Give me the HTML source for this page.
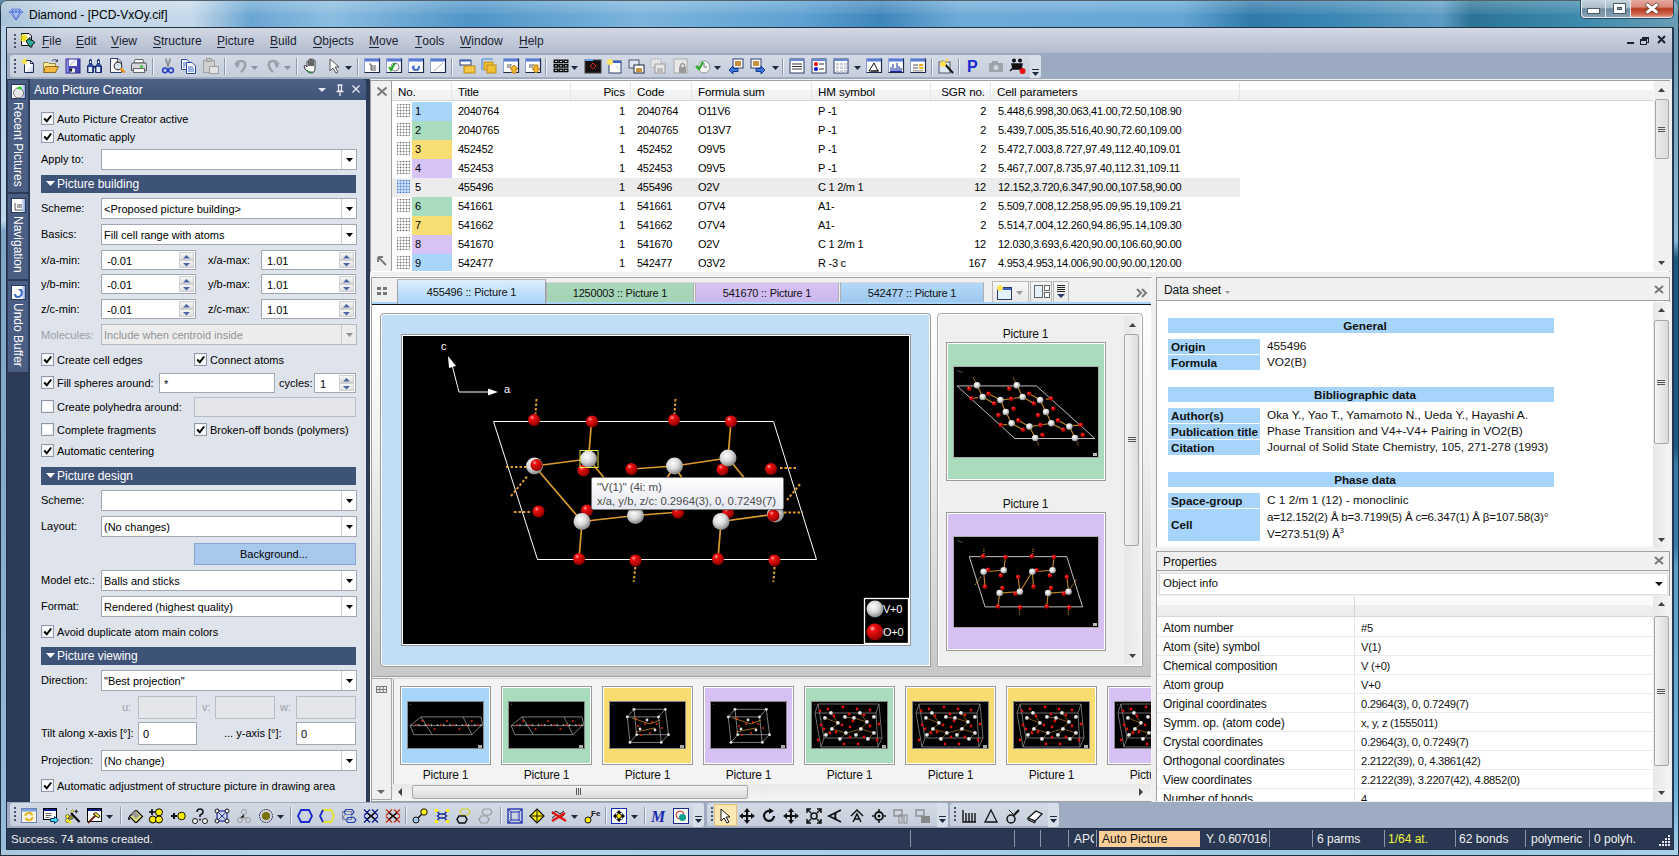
<!DOCTYPE html>
<html><head><meta charset="utf-8">
<style>
*{box-sizing:border-box}
body{margin:0;width:1679px;height:856px;overflow:hidden;position:relative;font-family:"Liberation Sans",sans-serif;font-size:12px;color:#000;background:#2a6a8e}
.a{position:absolute}
.t{position:absolute;white-space:nowrap;line-height:14px}
svg{position:absolute;overflow:visible}
u{text-decoration:none;border-bottom:1px solid #000;line-height:11px;display:inline-block}
</style></head><body>


<div class="a" style="left:0;top:0;width:1679px;height:856px;background:linear-gradient(90deg,#a9c3d9 0px,#c2d6e8 60px,#c6d9ea 190px,#6aa6d2 250px,#8bbde0 330px,#4f95c8 470px,#7cb5dc 640px,#5ea1d2 800px,#3f86bb 880px,#6eabd8 960px,#64a6d6 1180px,#2f7aa9 1250px,#3a86b4 1330px,#5d9cc4 1440px,#2c7496 1470px,#3c8aad 1580px,#6b9db6 1679px);border:1px solid #1d2e3c;border-radius:7px 7px 0 0"></div>
<div class="a" style="left:0;top:0;width:1679px;height:14px;background:linear-gradient(rgba(255,255,255,0.25),rgba(255,255,255,0.05))"></div>
<div class="t" style="left:29px;top:8px;font-size:12px;color:#000">Diamond - [PCD-VxOy.cif]</div>
<svg style="left:8px;top:8px" width="16" height="13" viewBox="0 0 16 13"><path d="M1 4 L4 1 L12 1 L15 4 L8 12 Z" fill="#a8c0ee" stroke="#7c98d8" stroke-width="1"/><path d="M1 4 H15 M5 1 L4 4 L8 12 M11 1 L12 4 L8 12 M8 1 L8 4" stroke="#3d5fd0" fill="none" stroke-width="0.9"/></svg>
<div class="a" style="left:1580px;top:0px;width:94px;height:19px;border:1px solid #2e4a5e;border-top:none;border-radius:0 0 5px 5px;overflow:hidden;background:#dfe8ee">
 <div class="a" style="left:1px;top:0;width:23px;height:17px;background:linear-gradient(#c7d6df,#a9bcc8 45%,#6e8aa0 52%,#8aa1b4);border-radius:0 0 0 4px"></div>
 <div class="a" style="left:25px;top:0;width:24px;height:17px;background:linear-gradient(#c7d6df,#a9bcc8 45%,#6e8aa0 52%,#8aa1b4)"></div>
 <div class="a" style="left:50px;top:0;width:42px;height:17px;background:linear-gradient(#e6aaa0,#d88a78 40%,#b63a1e 52%,#d06850 85%,#e4a090);border-radius:0 0 4px 0"></div>
 <div class="a" style="left:7px;top:9px;width:11px;height:4px;background:#fff;box-shadow:0 0 0 1px #4a5c6c"></div>
 <div class="a" style="left:33px;top:4px;width:11px;height:9px;border:3px solid #fff;box-shadow:0 0 0 1px #4a5c6c,inset 0 0 0 1px #4a5c6c"></div>
 <svg style="left:63px;top:3px" width="16" height="11" viewBox="0 0 16 11"><path d="M2 1 L14 10 M14 1 L2 10" stroke="#5a2a20" stroke-width="4.5"/><path d="M2.5 1.2 L13.5 9.8 M13.5 1.2 L2.5 9.8" stroke="#fff" stroke-width="3"/></svg>
</div>
<div class="a" style="left:1673px;top:26px;width:6px;height:830px;background:linear-gradient(#6a98b4 0,#7aaac6 120px,#8ab8d8 215px,#1f5a80 232px,#1f5a80 420px,#3a7aa8 440px,#3a7aa8 520px,#5aa0c8 540px,#6ab0d8 760px,#a8d0e8 830px);border-right:1px solid #1d2e3c"></div>
<div class="a" style="left:0;top:849px;width:1679px;height:7px;background:linear-gradient(90deg,#a9c8e0,#b8d8ec 300px,#a8d0e8 900px,#9ac8e2 1400px,#a8d0e8);border-bottom:1px solid #1d2e3c;border-left:1px solid #1d2e3c;border-right:1px solid #1d2e3c"></div>
<div class="a" style="left:0;top:26px;width:7px;height:824px;background:linear-gradient(90deg,#1d2e3c 0,#1d2e3c 1px,transparent 1px,transparent 6px,#d8e8f4 6px),linear-gradient(#b4cfe6 0,#bcd6ea 195px,#7ea4c8 205px,#86acd0 500px,#98bcdc 824px)"></div>
<div class="a" style="left:6px;top:27px;width:1668px;height:823px;border:1px solid #1f3344;background:#2b3a56"></div>

<div class="a" style="left:7px;top:28px;width:1665px;height:25px;background:linear-gradient(#d2d8e3,#c3cad9 50%,#b2bccf)"></div><div class="a" style="left:7px;top:53px;width:1665px;height:26px;background:#9ba9c1"></div><div class="a" style="left:14px;top:34px;width:2px;height:2px;background:#46536a"></div><div class="a" style="left:14px;top:38px;width:2px;height:2px;background:#46536a"></div><div class="a" style="left:14px;top:42px;width:2px;height:2px;background:#46536a"></div><div class="a" style="left:14px;top:46px;width:2px;height:2px;background:#46536a"></div><svg style="left:19px;top:32px" width="17" height="16" viewBox="0 0 17 16"><path d="M2.5 1.5 H10 L12.5 4 V13.5 H2.5 Z" fill="#f8f8f8" stroke="#111"/><path d="M5 2 V10 M1 6 H9 M2.2 3.2 L7.8 8.8 M7.8 3.2 L2.2 8.8" stroke="#f0e020" stroke-width="1.6"/><path d="M7 9 L11 5.5 V8 H13 L16 10.5 L13 13 V15 L11 15 Z" fill="#2aa890" stroke="#111"/></svg><div class="t" style="left:42px;top:34px;font-size:12px;color:#1b2333"><u style="border-color:#1b2333">F</u>ile</div><div class="t" style="left:76px;top:34px;font-size:12px;color:#1b2333"><u style="border-color:#1b2333">E</u>dit</div><div class="t" style="left:111px;top:34px;font-size:12px;color:#1b2333"><u style="border-color:#1b2333">V</u>iew</div><div class="t" style="left:153px;top:34px;font-size:12px;color:#1b2333"><u style="border-color:#1b2333">S</u>tructure</div><div class="t" style="left:217px;top:34px;font-size:12px;color:#1b2333"><u style="border-color:#1b2333">P</u>icture</div><div class="t" style="left:270px;top:34px;font-size:12px;color:#1b2333"><u style="border-color:#1b2333">B</u>uild</div><div class="t" style="left:313px;top:34px;font-size:12px;color:#1b2333"><u style="border-color:#1b2333">O</u>bjects</div><div class="t" style="left:369px;top:34px;font-size:12px;color:#1b2333"><u style="border-color:#1b2333">M</u>ove</div><div class="t" style="left:415px;top:34px;font-size:12px;color:#1b2333"><u style="border-color:#1b2333">T</u>ools</div><div class="t" style="left:460px;top:34px;font-size:12px;color:#1b2333"><u style="border-color:#1b2333">W</u>indow</div><div class="t" style="left:519px;top:34px;font-size:12px;color:#1b2333"><u style="border-color:#1b2333">H</u>elp</div><div class="a" style="left:1627px;top:42px;width:7px;height:2px;background:#1a2230"></div><div class="a" style="left:1642px;top:37px;width:7px;height:6px;border:1px solid #1a2230;border-top-width:2px"></div><div class="a" style="left:1640px;top:39px;width:7px;height:6px;border:1px solid #1a2230;border-top-width:2px;background:#c5cdda"></div><svg style="left:1657px;top:35px" width="9" height="9" viewBox="0 0 9 9"><path d="M1 1 L8 8 M8 1 L1 8" stroke="#1a2230" stroke-width="2"/></svg>
<div class="a" style="left:10px;top:55px;width:1031px;height:23px;background:linear-gradient(#d3dae5,#c6cedc);border-radius:3px;border-bottom:1px solid #a4afc2"></div><div class="a" style="left:1030px;top:55px;width:11px;height:23px;background:#d9dfe8;border-radius:0 3px 3px 0"></div><svg style="left:1032px;top:72px" width="7" height="4" viewBox="0 0 7 4"><path d="M0 0 H7 L3.5 4 Z" fill="#1c2a40"/></svg><div class="a" style="left:1032px;top:69px;width:7px;height:1px;background:#1c2a40"></div><div class="a" style="left:14px;top:59px;width:2px;height:2px;background:#46536a"></div><div class="a" style="left:14px;top:63px;width:2px;height:2px;background:#46536a"></div><div class="a" style="left:14px;top:67px;width:2px;height:2px;background:#46536a"></div><div class="a" style="left:14px;top:71px;width:2px;height:2px;background:#46536a"></div><svg style="left:21px;top:58px" width="16" height="16" viewBox="0 0 16 16"><defs><linearGradient id="gdoc" x1="0" y1="0" x2="1" y2="1"><stop offset="0.5" stop-color="#fff"/><stop offset="1" stop-color="#b8b8e0"/></linearGradient></defs><path d="M3.5 2.5 H9.5 L12.5 5.5 V14.5 H3.5 Z" fill="url(#gdoc)" stroke="#1c2a5a"/><path d="M9.5 2.5 V5.5 H12.5" fill="none" stroke="#1c2a5a"/><path d="M3.5 0.5 V6.5 M0.5 3.5 H6.5 M1.3 1.3 L5.7 5.7 M5.7 1.3 L1.3 5.7" stroke="#f4e040" stroke-width="1.2"/></svg><svg style="left:43px;top:58px" width="16" height="16" viewBox="0 0 16 16"><path d="M0.5 4.5 H5 L6 5.5 H12.5 V14.5 H0.5 Z" fill="#f8ea90" stroke="#9a8a50"/><path d="M2.5 8.5 H15.5 L12.5 14.5 H0.5 Z" fill="#f4b840" stroke="#8a6a20"/><path d="M9 2.5 Q11.5 0.5 14.5 2.5" stroke="#3a4a6a" fill="none"/><path d="M15 1 V4 H12 Z" fill="#3a4a6a"/></svg><svg style="left:65px;top:58px" width="16" height="16" viewBox="0 0 16 16"><rect x="1" y="1" width="14" height="14" fill="#4646b4" stroke="#2a2a90"/><rect x="1.5" y="1.5" width="2" height="13" fill="#8a8ae0"/><rect x="4" y="1.5" width="8" height="6.5" fill="#f4f4ff"/><path d="M5 7 L11 2" stroke="#b8b8d8"/><rect x="5" y="10.5" width="5" height="4" fill="#eee"/><rect x="5" y="10.5" width="2" height="3" fill="#111"/></svg><svg style="left:87px;top:58px" width="16" height="16" viewBox="0 0 16 16"><path d="M0.5 14.5 V8 L2.5 6 V2 Q3.5 0.5 4.5 2 V6 L6.5 8 V14.5 Z M8.5 14.5 V8 L10.5 6 V2 Q11.5 0.5 12.5 2 V6 L14.5 8 V14.5 Z" fill="#2a4aa8" stroke="#1c2a6a"/><rect x="1.5" y="9" width="3.5" height="5" fill="#e8ecf8"/><rect x="9.5" y="9" width="3.5" height="5" fill="#e8ecf8"/><path d="M6.5 9 H8.5" stroke="#1c2a6a" stroke-width="2"/><rect x="3" y="3" width="1.2" height="2" fill="#fff"/><rect x="11" y="3" width="1.2" height="2" fill="#fff"/></svg><svg style="left:110px;top:58px" width="16" height="16" viewBox="0 0 16 16"><path d="M0.5 0.5 H8 L11.5 4 V14.5 H0.5 Z" fill="#fff" stroke="#2a3a6a"/><circle cx="8" cy="8" r="3.8" fill="#e4ecf4" stroke="#3a3a3a" stroke-width="1.2"/><path d="M7 6 L9 8" stroke="#8aa"/><path d="M10.5 10.5 L14.5 14.5" stroke="#e89020" stroke-width="2.5"/><path d="M8 4 L7 1" stroke="#333"/></svg><svg style="left:131px;top:58px" width="16" height="16" viewBox="0 0 16 16"><path d="M4 1.5 H12 L13 5 H3 Z" fill="#fff" stroke="#666"/><path d="M0.5 6.5 Q0.5 5 2 5 H14 Q15.5 5 15.5 6.5 V12.5 H0.5 Z" fill="#d4d8de" stroke="#555"/><rect x="2.5" y="10.5" width="11" height="4" fill="#f4f4f4" stroke="#666"/><rect x="9" y="7.5" width="3" height="2" fill="#20c020"/></svg><div class="a" style="left:152px;top:58px;width:1px;height:17px;background:#8d99ad;box-shadow:1px 0 0 #eef1f6"></div><svg style="left:160px;top:58px" width="16" height="16" viewBox="0 0 16 16"><path d="M5.5 0.5 L8.5 9 M10.5 0.5 L7.5 9" stroke="#8a8a8a" stroke-width="1.6"/><circle cx="5" cy="12.3" r="2.4" fill="none" stroke="#2040c0" stroke-width="1.5"/><circle cx="11" cy="12.3" r="2.4" fill="none" stroke="#2040c0" stroke-width="1.5"/></svg><svg style="left:181px;top:58px" width="16" height="16" viewBox="0 0 16 16"><path d="M0.5 1.5 H6 L8.5 4 V11.5 H0.5 Z" fill="#fff" stroke="#2a4aa0"/><path d="M5.5 4.5 H11 L14.5 8 V15.5 H5.5 Z" fill="#fff" stroke="#2a4aa0"/><path d="M2 5 H6 M2 7 H6 M2 9 H4 M7 9 H12 M7 11 H13 M7 13 H13" stroke="#3a6ad0"/></svg><svg style="left:203px;top:58px" width="16" height="16" viewBox="0 0 16 16"><rect x="0.5" y="2.5" width="11" height="12" fill="#d0d0d0" stroke="#a0a0a0"/><rect x="3.5" y="0.5" width="5" height="3" fill="#c0c0c0" stroke="#a0a0a0"/><rect x="6.5" y="8.5" width="9" height="7" fill="#e4e4e4" stroke="#a0a0a0"/></svg><div class="a" style="left:224px;top:58px;width:1px;height:17px;background:#8d99ad;box-shadow:1px 0 0 #eef1f6"></div><svg style="left:233px;top:58px" width="16" height="16" viewBox="0 0 16 16"><path d="M4 9 Q2 3 8 3 Q13 3 12 8 Q11 12 8 14" stroke="#9aa0aa" stroke-width="2.5" fill="none"/><path d="M1 5 L5 10 L7 5 Z" fill="#9aa0aa"/></svg><svg style="left:251px;top:66px" width="7" height="4" viewBox="0 0 7 4"><path d="M0 0 H7 L3.5 4 Z" fill="#8a93a3"/></svg><svg style="left:265px;top:58px" width="16" height="16" viewBox="0 0 16 16"><path d="M12 9 Q14 3 8 3 Q3 3 4 8 Q5 12 8 14" stroke="#9aa0aa" stroke-width="2.5" fill="none"/><path d="M15 5 L11 10 L9 5 Z" fill="#9aa0aa"/></svg><svg style="left:284px;top:66px" width="7" height="4" viewBox="0 0 7 4"><path d="M0 0 H7 L3.5 4 Z" fill="#8a93a3"/></svg><div class="a" style="left:296px;top:58px;width:1px;height:17px;background:#8d99ad;box-shadow:1px 0 0 #eef1f6"></div><svg style="left:303px;top:58px" width="16" height="16" viewBox="0 0 16 16"><path d="M4 9 V4 Q4 3 5 3 Q6 3 6 4 V8 V2 Q6 1 7 1 Q8 1 8 2 V8 V2 Q8 1 9 1 Q10 1 10 2 V8 V3 Q10 2 11 2 Q12 2 12 3 V10 Q12 15 8 15 Q5 15 2 11 L1 8 Q2 7 3 8 Z" fill="#fff" stroke="#222" stroke-width=".9"/><path d="M3 12 Q6 15 10 14" stroke="#3a8a4a" stroke-width="1.5" fill="none"/></svg><svg style="left:328px;top:58px" width="16" height="16" viewBox="0 0 16 16"><path d="M2 1 L2 13 L5 10 L8 15 L10 14 L7 9 L11 9 Z" fill="#fff" stroke="#555"/></svg><svg style="left:345px;top:66px" width="7" height="4" viewBox="0 0 7 4"><path d="M0 0 H7 L3.5 4 Z" fill="#1c2a40"/></svg><div class="a" style="left:357px;top:58px;width:1px;height:17px;background:#8d99ad;box-shadow:1px 0 0 #eef1f6"></div><svg style="left:364px;top:58px" width="16" height="16" viewBox="0 0 16 16"><rect x="0.5" y="0.5" width="15" height="14" fill="#fff" stroke="#8aa0d8"/><path d="M15.5 0.5 V14.5 H0.5" stroke="#1c2a4a" fill="none" stroke-width="1.2"/><rect x="1" y="1" width="14" height="2.5" fill="#5a7ad8"/><path d="M10 13.5 L14.5 9" stroke="#c8d4ec"/><path d="M5 6 H7 V12 H12 M7 8 H12 M7 10 H12" stroke="#555" fill="none"/></svg><svg style="left:386px;top:58px" width="16" height="16" viewBox="0 0 16 16"><rect x="0.5" y="0.5" width="15" height="14" fill="#fff" stroke="#8aa0d8"/><path d="M15.5 0.5 V14.5 H0.5" stroke="#1c2a4a" fill="none" stroke-width="1.2"/><rect x="1" y="1" width="14" height="2.5" fill="#5a7ad8"/><path d="M10 13.5 L14.5 9" stroke="#c8d4ec"/><circle cx="9" cy="9" r="4" fill="#fff" stroke="#888"/><path d="M3 9 L5 12 L9 5" stroke="#2a2" stroke-width="2" fill="none"/></svg><svg style="left:408px;top:58px" width="16" height="16" viewBox="0 0 16 16"><rect x="0.5" y="0.5" width="15" height="14" fill="#fff" stroke="#8aa0d8"/><path d="M15.5 0.5 V14.5 H0.5" stroke="#1c2a4a" fill="none" stroke-width="1.2"/><rect x="1" y="1" width="14" height="2.5" fill="#5a7ad8"/><path d="M10 13.5 L14.5 9" stroke="#c8d4ec"/><path d="M11 8 Q11 12 8 12 Q5 12 5 9" stroke="#3a6ad0" stroke-width="2" fill="none"/><path d="M3 9 L7 7 L6 11 Z" fill="#3a6ad0"/></svg><svg style="left:430px;top:58px" width="16" height="16" viewBox="0 0 16 16"><rect x="0.5" y="0.5" width="15" height="14" fill="#fff" stroke="#8aa0d8"/><path d="M15.5 0.5 V14.5 H0.5" stroke="#1c2a4a" fill="none" stroke-width="1.2"/><rect x="1" y="1" width="14" height="2.5" fill="#5a7ad8"/><path d="M10 13.5 L14.5 9" stroke="#c8d4ec"/><path d="M4 13 L13 5" stroke="#aab" /></svg><div class="a" style="left:451px;top:58px;width:1px;height:17px;background:#8d99ad;box-shadow:1px 0 0 #eef1f6"></div><svg style="left:459px;top:58px" width="16" height="16" viewBox="0 0 16 16"><rect x="1" y="2" width="11" height="5" fill="#fff" stroke="#2a3c6a"/><rect x="1" y="2" width="11" height="1.5" fill="#3a64c8"/><rect x="5" y="8" width="11" height="7" fill="#f0c030" stroke="#c09020"/><path d="M7 10 H15 M7 12.5 H15" stroke="#fff3a0" stroke-dasharray="1 1"/></svg><svg style="left:481px;top:58px" width="16" height="16" viewBox="0 0 16 16"><path d="M1 1 H12 M1 1 V12" stroke="#6aa0e0" stroke-width="1.5"/><rect x="3" y="4" width="9" height="8" fill="#f0c030" stroke="#c09020"/><rect x="6" y="7" width="9" height="8" fill="#f0c030" stroke="#c09020"/></svg><svg style="left:503px;top:58px" width="16" height="16" viewBox="0 0 16 16"><rect x="0.5" y="0.5" width="15" height="14" fill="#fff" stroke="#8aa0d8"/><path d="M15.5 0.5 V14.5 H0.5" stroke="#1c2a4a" fill="none" stroke-width="1.2"/><rect x="1" y="1" width="14" height="2.5" fill="#5a7ad8"/><path d="M10 13.5 L14.5 9" stroke="#c8d4ec"/><path d="M4 7 H9 M4 9 H8" stroke="#555"/><path d="M9 15 V11 H7 L11 7 L15 11 H13 V15 Z" fill="#f4b830" stroke="#c08010"/></svg><svg style="left:525px;top:58px" width="16" height="16" viewBox="0 0 16 16"><rect x="0.5" y="0.5" width="15" height="14" fill="#fff" stroke="#8aa0d8"/><path d="M15.5 0.5 V14.5 H0.5" stroke="#1c2a4a" fill="none" stroke-width="1.2"/><rect x="1" y="1" width="14" height="2.5" fill="#5a7ad8"/><path d="M10 13.5 L14.5 9" stroke="#c8d4ec"/><path d="M4 7 H9 M4 9 H8" stroke="#555"/><path d="M9 7 V11 H7 L11 15 L15 11 H13 V7 Z" fill="#f4b830" stroke="#c08010"/></svg><div class="a" style="left:545px;top:58px;width:1px;height:17px;background:#8d99ad;box-shadow:1px 0 0 #eef1f6"></div><svg style="left:553px;top:58px" width="16" height="16" viewBox="0 0 16 16"><rect x="1.2" y="2.2" width="3.6" height="2.4" fill="none" stroke="#000" stroke-width="1.3"/><rect x="1.2" y="6.7" width="3.6" height="2.4" fill="none" stroke="#000" stroke-width="1.3"/><rect x="1.2" y="11.2" width="3.6" height="2.4" fill="none" stroke="#000" stroke-width="1.3"/><rect x="6.2" y="2.2" width="3.6" height="2.4" fill="none" stroke="#000" stroke-width="1.3"/><rect x="6.2" y="6.7" width="3.6" height="2.4" fill="none" stroke="#000" stroke-width="1.3"/><rect x="6.2" y="11.2" width="3.6" height="2.4" fill="none" stroke="#000" stroke-width="1.3"/><rect x="11.2" y="2.2" width="3.6" height="2.4" fill="none" stroke="#000" stroke-width="1.3"/><rect x="11.2" y="6.7" width="3.6" height="2.4" fill="none" stroke="#000" stroke-width="1.3"/><rect x="11.2" y="11.2" width="3.6" height="2.4" fill="none" stroke="#000" stroke-width="1.3"/></svg><svg style="left:571px;top:66px" width="7" height="4" viewBox="0 0 7 4"><path d="M0 0 H7 L3.5 4 Z" fill="#1c2a40"/></svg><svg style="left:585px;top:58px" width="16" height="16" viewBox="0 0 16 16"><rect x="0" y="2" width="16" height="13" fill="#111" stroke="#444"/><rect x="0" y="1" width="8" height="2" fill="#6aa0e0"/><path d="M8 5 L11 8 L8 11 L5 8 Z" fill="none" stroke="#d22"/></svg><svg style="left:606px;top:58px" width="16" height="16" viewBox="0 0 16 16"><rect x="3" y="3" width="12" height="12" fill="#fff" stroke="#2a3c6a"/><rect x="3" y="3" width="12" height="2" fill="#3a64c8"/><path d="M10 8 L15 13" stroke="#bcd" /><circle cx="4" cy="4" r="3" fill="#ffe860"/></svg><svg style="left:628px;top:58px" width="16" height="16" viewBox="0 0 16 16"><rect x="1" y="2" width="10" height="8" fill="#dde6f4" stroke="#556"/><rect x="6" y="7" width="10" height="8" fill="#fff" stroke="#223"/><rect x="8" y="10" width="6" height="4" fill="#c89040"/></svg><svg style="left:650px;top:58px" width="16" height="16" viewBox="0 0 16 16"><rect x="1" y="1" width="10" height="8" fill="#e6e6e6" stroke="#aaa" stroke-dasharray="2 1"/><rect x="5" y="6" width="10" height="9" fill="#e6e6e6" stroke="#999"/><rect x="7" y="10" width="6" height="4" fill="#bbb"/></svg><svg style="left:673px;top:58px" width="16" height="16" viewBox="0 0 16 16"><rect x="1" y="1" width="13" height="14" fill="#e8e8e8" stroke="#aaa"/><rect x="6" y="9" width="7" height="6" fill="#999"/><path d="M7.5 9 V7 Q9.5 4 11.5 7 V9" stroke="#999" fill="none" stroke-width="1.5"/></svg><svg style="left:695px;top:58px" width="16" height="16" viewBox="0 0 16 16"><circle cx="9" cy="9" r="6" fill="#f4f4f4" stroke="#999"/><path d="M9 5 V9 H12" stroke="#777" fill="none"/><path d="M1 8 L4 11 L8 4" stroke="#2a2" stroke-width="2.2" fill="none"/></svg><svg style="left:714px;top:66px" width="7" height="4" viewBox="0 0 7 4"><path d="M0 0 H7 L3.5 4 Z" fill="#1c2a40"/></svg><svg style="left:728px;top:58px" width="16" height="16" viewBox="0 0 16 16"><rect x="5" y="1" width="10" height="9" fill="#fff" stroke="#2a3c6a"/><rect x="7" y="3" width="6" height="5" fill="#c89040"/><path d="M1 12 L5 8 V10.5 H10 V13.5 H5 V16 Z" fill="#3a7ae0" stroke="#1a3a90"/></svg><svg style="left:750px;top:58px" width="16" height="16" viewBox="0 0 16 16"><rect x="1" y="1" width="10" height="9" fill="#fff" stroke="#2a3c6a"/><rect x="3" y="3" width="6" height="5" fill="#c89040"/><path d="M15 12 L11 8 V10.5 H6 V13.5 H11 V16 Z" fill="#3a7ae0" stroke="#1a3a90"/></svg><svg style="left:772px;top:66px" width="7" height="4" viewBox="0 0 7 4"><path d="M0 0 H7 L3.5 4 Z" fill="#1c2a40"/></svg><div class="a" style="left:782px;top:58px;width:1px;height:17px;background:#8d99ad;box-shadow:1px 0 0 #eef1f6"></div><svg style="left:789px;top:58px" width="16" height="16" viewBox="0 0 16 16"><rect x="1" y="1" width="14" height="14" fill="#fff" stroke="#2a3c6a"/><rect x="1" y="1" width="14" height="2" fill="#6a8ad0"/><path d="M3 6 H13 M3 8.5 H13 M3 11 H13" stroke="#333"/></svg><svg style="left:811px;top:58px" width="16" height="16" viewBox="0 0 16 16"><rect x="1" y="1" width="14" height="14" fill="#fff" stroke="#2a3c6a"/><rect x="1" y="1" width="14" height="2" fill="#6a8ad0"/><circle cx="5" cy="6" r="2" fill="#e00"/><circle cx="5" cy="11" r="2" fill="#00c"/><path d="M8 6 H13 M8 11 H13" stroke="#333"/></svg><svg style="left:833px;top:58px" width="16" height="16" viewBox="0 0 16 16"><rect x="1" y="1" width="14" height="14" fill="#fff" stroke="#2a3c6a"/><rect x="1" y="1" width="14" height="2" fill="#6a8ad0"/><rect x="3" y="5.0" width="3" height="2.5" fill="#ccd"/><rect x="3" y="8.5" width="3" height="2.5" fill="#ccd"/><rect x="3" y="12.0" width="3" height="2.5" fill="#ccd"/><rect x="7" y="5.0" width="3" height="2.5" fill="#ccd"/><rect x="7" y="8.5" width="3" height="2.5" fill="#ccd"/><rect x="7" y="12.0" width="3" height="2.5" fill="#ccd"/><rect x="11" y="5.0" width="3" height="2.5" fill="#ccd"/><rect x="11" y="8.5" width="3" height="2.5" fill="#ccd"/><rect x="11" y="12.0" width="3" height="2.5" fill="#ccd"/></svg><svg style="left:854px;top:66px" width="7" height="4" viewBox="0 0 7 4"><path d="M0 0 H7 L3.5 4 Z" fill="#1c2a40"/></svg><svg style="left:866px;top:58px" width="16" height="16" viewBox="0 0 16 16"><rect x="0.5" y="0.5" width="15" height="14" fill="#fff" stroke="#8aa0d8"/><path d="M15.5 0.5 V14.5 H0.5" stroke="#1c2a4a" fill="none" stroke-width="1.2"/><rect x="1" y="1" width="14" height="2.5" fill="#5a7ad8"/><path d="M10 13.5 L14.5 9" stroke="#c8d4ec"/><path d="M3 13 L8 5 L12 13 Z" fill="none" stroke="#111"/><path d="M5 13 H13" stroke="#111"/></svg><svg style="left:888px;top:58px" width="16" height="16" viewBox="0 0 16 16"><rect x="0.5" y="0.5" width="15" height="14" fill="#fff" stroke="#8aa0d8"/><path d="M15.5 0.5 V14.5 H0.5" stroke="#1c2a4a" fill="none" stroke-width="1.2"/><rect x="1" y="1" width="14" height="2.5" fill="#5a7ad8"/><path d="M10 13.5 L14.5 9" stroke="#c8d4ec"/><path d="M3 13 V9 M5 13 V6 M7 13 V10 M9 13 V5 M11 13 V8 M13 13 V10 M2 13.5 H14" stroke="#1a2aa0"/></svg><svg style="left:910px;top:58px" width="16" height="16" viewBox="0 0 16 16"><rect x="0.5" y="0.5" width="15" height="14" fill="#fff" stroke="#8aa0d8"/><path d="M15.5 0.5 V14.5 H0.5" stroke="#1c2a4a" fill="none" stroke-width="1.2"/><rect x="1" y="1" width="14" height="2.5" fill="#5a7ad8"/><path d="M10 13.5 L14.5 9" stroke="#c8d4ec"/><rect x="3" y="6" width="5" height="2" fill="#aaa"/><rect x="3" y="9" width="5" height="2" fill="#aaa"/><rect x="9" y="6" width="4" height="2" fill="#f4a020"/><rect x="9" y="9" width="4" height="2" fill="#f4c020"/><rect x="3" y="12" width="10" height="1.5" fill="#aaa"/></svg><div class="a" style="left:931px;top:58px;width:1px;height:17px;background:#8d99ad;box-shadow:1px 0 0 #eef1f6"></div><svg style="left:938px;top:58px" width="16" height="16" viewBox="0 0 16 16"><rect x="1" y="4" width="11" height="11" fill="#dde6f4" stroke="#556"/><path d="M4 3 L15 15" stroke="#111" stroke-width="2"/><circle cx="5" cy="6" r="3" fill="#ffe050"/><circle cx="9" cy="2" r="1.5" fill="#ffe050"/></svg><div class="a" style="left:958px;top:58px;width:1px;height:17px;background:#8d99ad;box-shadow:1px 0 0 #eef1f6"></div><svg style="left:966px;top:58px" width="16" height="16" viewBox="0 0 16 16"><text x="1" y="14" font-family="Liberation Sans" font-weight="bold" font-size="16" fill="#1a2ad0">P</text></svg><svg style="left:988px;top:58px" width="16" height="16" viewBox="0 0 16 16"><rect x="1" y="5" width="14" height="9" rx="1" fill="#9aa4aa"/><rect x="4" y="3" width="6" height="3" fill="#9aa4aa"/><circle cx="8" cy="9.5" r="2.5" fill="#d0d8dc"/></svg><svg style="left:1010px;top:58px" width="16" height="16" viewBox="0 0 16 16"><circle cx="4" cy="2.5" r="2" fill="#111"/><circle cx="10" cy="2.5" r="2" fill="#111"/><path d="M2 6 L12 6 L11 11 L3 11 Z M0 13 L4 9 M13 13 L10 9" stroke="#111" stroke-width="1.5" fill="#111"/><circle cx="12.5" cy="13" r="3" fill="#e81010"/></svg>
<div class="a" style="left:7px;top:79px;width:363px;height:723px;background:#2c3b57"></div><div class="a" style="left:8px;top:80px;width:20px;height:113px;background:#4a5d82;border-bottom:1px solid #2c3b57"></div><div class="a" style="left:11px;top:84px;width:15px;height:15px;background:linear-gradient(90deg,#fff 70%,#8aa8e8);border:1px solid #2a3a5a"></div><div class="t" style="left:10px;top:102px;font-size:12px;color:#fff;writing-mode:vertical-rl;line-height:16px">Recent Pictures</div><div class="a" style="left:8px;top:194px;width:20px;height:86px;background:#4a5d82;border-bottom:1px solid #2c3b57"></div><div class="a" style="left:11px;top:198px;width:15px;height:15px;background:linear-gradient(90deg,#fff 70%,#8aa8e8);border:1px solid #2a3a5a"></div><div class="t" style="left:10px;top:216px;font-size:12px;color:#fff;writing-mode:vertical-rl;line-height:16px">Navigation</div><div class="a" style="left:8px;top:281px;width:20px;height:92px;background:#4a5d82;border-bottom:1px solid #2c3b57"></div><div class="a" style="left:11px;top:285px;width:15px;height:15px;background:linear-gradient(90deg,#fff 70%,#8aa8e8);border:1px solid #2a3a5a"></div><div class="t" style="left:10px;top:303px;font-size:12px;color:#fff;writing-mode:vertical-rl;line-height:16px">Undo Buffer</div><svg style="left:12px;top:85px" width="14" height="14" viewBox="0 0 14 14"><circle cx="6.5" cy="8" r="5" fill="#e8e8e8" stroke="#777"/><path d="M4 3 L9 1 L10 5 Z" fill="#3c3"/></svg><svg style="left:12px;top:199px" width="14" height="14" viewBox="0 0 14 14"><path d="M3 4 V11 H11 M5 6 H10 M5 8 H10" stroke="#555" fill="none"/></svg><svg style="left:12px;top:286px" width="14" height="14" viewBox="0 0 14 14"><path d="M10 5 Q10 11 6 11 Q3 11 3 8" stroke="#3a6ad0" stroke-width="2" fill="none"/><path d="M6 3 L10 3 L10 7 Z" fill="#3a6ad0"/></svg><div class="a" style="left:30px;top:79px;width:336px;height:21px;background:linear-gradient(#4d6186,#3f5478);border-radius:0 4px 0 0"></div><div class="t" style="left:34px;top:83px;font-size:12px;color:#fff;">Auto Picture Creator</div><svg style="left:318px;top:88px" width="8" height="4" viewBox="0 0 8 4"><path d="M0 0 H8 L4 4 Z" fill="#e6eaf0"/></svg><svg style="left:336px;top:84px" width="8" height="12" viewBox="0 0 8 12"><path d="M1.5 1 H6.5 M2.5 1 V7 H5.5 V1 M0.5 7.5 H7.5 M4 8 V12" stroke="#e6eaf0" stroke-width="1.3" fill="none"/></svg><svg style="left:352px;top:85px" width="8" height="8" viewBox="0 0 8 8"><path d="M0.5 0.5 L7.5 7.5 M7.5 0.5 L0.5 7.5" stroke="#e6eaf0" stroke-width="1.4"/></svg><div class="a" style="left:30px;top:100px;width:336px;height:702px;background:#dfe3eb"></div><div class="a" style="left:41px;top:112px;width:13px;height:13px;background:#fff;border:1px solid #8e99ab;box-shadow:inset 0 0 0 1px #eef0f4"></div><svg style="left:43px;top:114px" width="9" height="9" viewBox="0 0 9 9"><path d="M1.2 4.5 L3.8 7.3 L8.2 1.5" stroke="#000" stroke-width="2" fill="none"/></svg><div class="t" style="left:57px;top:112px;font-size:11px;color:#000;">Auto Picture Creator active</div><div class="a" style="left:41px;top:130px;width:13px;height:13px;background:#fff;border:1px solid #8e99ab;box-shadow:inset 0 0 0 1px #eef0f4"></div><svg style="left:43px;top:132px" width="9" height="9" viewBox="0 0 9 9"><path d="M1.2 4.5 L3.8 7.3 L8.2 1.5" stroke="#000" stroke-width="2" fill="none"/></svg><div class="t" style="left:57px;top:130px;font-size:11px;color:#000;">Automatic apply</div><div class="t" style="left:41px;top:152px;font-size:11px;color:#000;">Apply to:</div><div class="a" style="left:101px;top:149px;width:256px;height:21px;background:#fff;border:1px solid #a3a8b0"></div><div class="a" style="left:341px;top:150px;width:1px;height:19px;background:#c9ccd1"></div><svg style="left:346px;top:158px" width="7" height="4" viewBox="0 0 7 4"><path d="M0 0 H7 L3.5 4 Z" fill="#000"/></svg><div class="a" style="left:41px;top:175px;width:315px;height:18px;background:#3e5378"></div><svg style="left:46px;top:181px" width="9" height="5" viewBox="0 0 9 5"><path d="M0 0 H9 L4.5 5 Z" fill="#fff"/></svg><div class="t" style="left:57px;top:177px;font-size:12px;color:#fff;">Picture building</div><div class="t" style="left:41px;top:201px;font-size:11px;color:#000;">Scheme:</div><div class="a" style="left:101px;top:198px;width:256px;height:21px;background:#fff;border:1px solid #a3a8b0"></div><div class="a" style="left:341px;top:199px;width:1px;height:19px;background:#c9ccd1"></div><svg style="left:346px;top:207px" width="7" height="4" viewBox="0 0 7 4"><path d="M0 0 H7 L3.5 4 Z" fill="#000"/></svg><div class="t" style="left:104px;top:202px;font-size:11px;color:#000;">&lt;Proposed picture building&gt;</div><div class="t" style="left:41px;top:227px;font-size:11px;color:#000;">Basics:</div><div class="a" style="left:101px;top:224px;width:256px;height:21px;background:#fff;border:1px solid #a3a8b0"></div><div class="a" style="left:341px;top:225px;width:1px;height:19px;background:#c9ccd1"></div><svg style="left:346px;top:233px" width="7" height="4" viewBox="0 0 7 4"><path d="M0 0 H7 L3.5 4 Z" fill="#000"/></svg><div class="t" style="left:104px;top:228px;font-size:11px;color:#000;">Fill cell range with atoms</div><div class="t" style="left:41px;top:253px;font-size:11px;color:#000;">x/a-min:</div><div class="a" style="left:101px;top:250px;width:95px;height:20px;background:#fff;border:1px solid #a3a8b0"></div><div class="a" style="left:179px;top:252px;width:15px;height:8px;background:linear-gradient(#f6f6f6,#dedede);border:1px solid #cfcfcf"></div><div class="a" style="left:179px;top:260px;width:15px;height:8px;background:linear-gradient(#f6f6f6,#dedede);border:1px solid #cfcfcf"></div><svg style="left:183px;top:255px" width="7" height="4" viewBox="0 0 7 4"><path d="M0 3.5 H7 L3.5 0 Z" fill="#4a66a8"/></svg><svg style="left:183px;top:263px" width="7" height="4" viewBox="0 0 7 4"><path d="M0 0 H7 L3.5 3.5 Z" fill="#4a66a8"/></svg><div class="t" style="left:107px;top:254px;font-size:11px;color:#000;">-0.01</div><div class="t" style="left:208px;top:253px;font-size:11px;color:#000;">x/a-max:</div><div class="a" style="left:261px;top:250px;width:95px;height:20px;background:#fff;border:1px solid #a3a8b0"></div><div class="a" style="left:339px;top:252px;width:15px;height:8px;background:linear-gradient(#f6f6f6,#dedede);border:1px solid #cfcfcf"></div><div class="a" style="left:339px;top:260px;width:15px;height:8px;background:linear-gradient(#f6f6f6,#dedede);border:1px solid #cfcfcf"></div><svg style="left:343px;top:255px" width="7" height="4" viewBox="0 0 7 4"><path d="M0 3.5 H7 L3.5 0 Z" fill="#4a66a8"/></svg><svg style="left:343px;top:263px" width="7" height="4" viewBox="0 0 7 4"><path d="M0 0 H7 L3.5 3.5 Z" fill="#4a66a8"/></svg><div class="t" style="left:267px;top:254px;font-size:11px;color:#000;">1.01</div><div class="t" style="left:41px;top:277px;font-size:11px;color:#000;">y/b-min:</div><div class="a" style="left:101px;top:274px;width:95px;height:20px;background:#fff;border:1px solid #a3a8b0"></div><div class="a" style="left:179px;top:276px;width:15px;height:8px;background:linear-gradient(#f6f6f6,#dedede);border:1px solid #cfcfcf"></div><div class="a" style="left:179px;top:284px;width:15px;height:8px;background:linear-gradient(#f6f6f6,#dedede);border:1px solid #cfcfcf"></div><svg style="left:183px;top:279px" width="7" height="4" viewBox="0 0 7 4"><path d="M0 3.5 H7 L3.5 0 Z" fill="#4a66a8"/></svg><svg style="left:183px;top:287px" width="7" height="4" viewBox="0 0 7 4"><path d="M0 0 H7 L3.5 3.5 Z" fill="#4a66a8"/></svg><div class="t" style="left:107px;top:278px;font-size:11px;color:#000;">-0.01</div><div class="t" style="left:208px;top:277px;font-size:11px;color:#000;">y/b-max:</div><div class="a" style="left:261px;top:274px;width:95px;height:20px;background:#fff;border:1px solid #a3a8b0"></div><div class="a" style="left:339px;top:276px;width:15px;height:8px;background:linear-gradient(#f6f6f6,#dedede);border:1px solid #cfcfcf"></div><div class="a" style="left:339px;top:284px;width:15px;height:8px;background:linear-gradient(#f6f6f6,#dedede);border:1px solid #cfcfcf"></div><svg style="left:343px;top:279px" width="7" height="4" viewBox="0 0 7 4"><path d="M0 3.5 H7 L3.5 0 Z" fill="#4a66a8"/></svg><svg style="left:343px;top:287px" width="7" height="4" viewBox="0 0 7 4"><path d="M0 0 H7 L3.5 3.5 Z" fill="#4a66a8"/></svg><div class="t" style="left:267px;top:278px;font-size:11px;color:#000;">1.01</div><div class="t" style="left:41px;top:302px;font-size:11px;color:#000;">z/c-min:</div><div class="a" style="left:101px;top:299px;width:95px;height:20px;background:#fff;border:1px solid #a3a8b0"></div><div class="a" style="left:179px;top:301px;width:15px;height:8px;background:linear-gradient(#f6f6f6,#dedede);border:1px solid #cfcfcf"></div><div class="a" style="left:179px;top:309px;width:15px;height:8px;background:linear-gradient(#f6f6f6,#dedede);border:1px solid #cfcfcf"></div><svg style="left:183px;top:304px" width="7" height="4" viewBox="0 0 7 4"><path d="M0 3.5 H7 L3.5 0 Z" fill="#4a66a8"/></svg><svg style="left:183px;top:312px" width="7" height="4" viewBox="0 0 7 4"><path d="M0 0 H7 L3.5 3.5 Z" fill="#4a66a8"/></svg><div class="t" style="left:107px;top:303px;font-size:11px;color:#000;">-0.01</div><div class="t" style="left:208px;top:302px;font-size:11px;color:#000;">z/c-max:</div><div class="a" style="left:261px;top:299px;width:95px;height:20px;background:#fff;border:1px solid #a3a8b0"></div><div class="a" style="left:339px;top:301px;width:15px;height:8px;background:linear-gradient(#f6f6f6,#dedede);border:1px solid #cfcfcf"></div><div class="a" style="left:339px;top:309px;width:15px;height:8px;background:linear-gradient(#f6f6f6,#dedede);border:1px solid #cfcfcf"></div><svg style="left:343px;top:304px" width="7" height="4" viewBox="0 0 7 4"><path d="M0 3.5 H7 L3.5 0 Z" fill="#4a66a8"/></svg><svg style="left:343px;top:312px" width="7" height="4" viewBox="0 0 7 4"><path d="M0 0 H7 L3.5 3.5 Z" fill="#4a66a8"/></svg><div class="t" style="left:267px;top:303px;font-size:11px;color:#000;">1.01</div><div class="t" style="left:41px;top:328px;font-size:11px;color:#9aa0a8;">Molecules:</div><div class="a" style="left:101px;top:324px;width:256px;height:21px;background:#ececec;border:1px solid #b5b9bf"></div><div class="a" style="left:341px;top:325px;width:1px;height:19px;background:#c9ccd1"></div><svg style="left:346px;top:333px" width="7" height="4" viewBox="0 0 7 4"><path d="M0 0 H7 L3.5 4 Z" fill="#8f949b"/></svg><div class="t" style="left:104px;top:328px;font-size:11px;color:#8f949b;">Include when centroid inside</div><div class="a" style="left:41px;top:353px;width:13px;height:13px;background:#fff;border:1px solid #8e99ab;box-shadow:inset 0 0 0 1px #eef0f4"></div><svg style="left:43px;top:355px" width="9" height="9" viewBox="0 0 9 9"><path d="M1.2 4.5 L3.8 7.3 L8.2 1.5" stroke="#000" stroke-width="2" fill="none"/></svg><div class="t" style="left:57px;top:353px;font-size:11px;color:#000;">Create cell edges</div><div class="a" style="left:194px;top:353px;width:13px;height:13px;background:#fff;border:1px solid #8e99ab;box-shadow:inset 0 0 0 1px #eef0f4"></div><svg style="left:196px;top:355px" width="9" height="9" viewBox="0 0 9 9"><path d="M1.2 4.5 L3.8 7.3 L8.2 1.5" stroke="#000" stroke-width="2" fill="none"/></svg><div class="t" style="left:210px;top:353px;font-size:11px;color:#000;">Connect atoms</div><div class="a" style="left:41px;top:376px;width:13px;height:13px;background:#fff;border:1px solid #8e99ab;box-shadow:inset 0 0 0 1px #eef0f4"></div><svg style="left:43px;top:378px" width="9" height="9" viewBox="0 0 9 9"><path d="M1.2 4.5 L3.8 7.3 L8.2 1.5" stroke="#000" stroke-width="2" fill="none"/></svg><div class="t" style="left:57px;top:376px;font-size:11px;color:#000;">Fill spheres around:</div><div class="a" style="left:159px;top:373px;width:116px;height:20px;background:#fff;border:1px solid #a3a8b0"></div><div class="t" style="left:164px;top:377px;font-size:11px;color:#000;">*</div><div class="t" style="left:279px;top:376px;font-size:11px;color:#000;">cycles:</div><div class="a" style="left:314px;top:373px;width:42px;height:20px;background:#fff;border:1px solid #a3a8b0"></div><div class="a" style="left:339px;top:375px;width:15px;height:8px;background:linear-gradient(#f6f6f6,#dedede);border:1px solid #cfcfcf"></div><div class="a" style="left:339px;top:383px;width:15px;height:8px;background:linear-gradient(#f6f6f6,#dedede);border:1px solid #cfcfcf"></div><svg style="left:343px;top:378px" width="7" height="4" viewBox="0 0 7 4"><path d="M0 3.5 H7 L3.5 0 Z" fill="#4a66a8"/></svg><svg style="left:343px;top:386px" width="7" height="4" viewBox="0 0 7 4"><path d="M0 0 H7 L3.5 3.5 Z" fill="#4a66a8"/></svg><div class="t" style="left:320px;top:377px;font-size:11px;color:#000;">1</div><div class="a" style="left:41px;top:400px;width:13px;height:13px;background:#fff;border:1px solid #8e99ab;box-shadow:inset 0 0 0 1px #eef0f4"></div><div class="t" style="left:57px;top:400px;font-size:11px;color:#000;">Create polyhedra around:</div><div class="a" style="left:194px;top:397px;width:162px;height:20px;background:#e4e6e9;border:1px solid #b9bdc3"></div><div class="a" style="left:41px;top:423px;width:13px;height:13px;background:#fff;border:1px solid #8e99ab;box-shadow:inset 0 0 0 1px #eef0f4"></div><div class="t" style="left:57px;top:423px;font-size:11px;color:#000;">Complete fragments</div><div class="a" style="left:194px;top:423px;width:13px;height:13px;background:#fff;border:1px solid #8e99ab;box-shadow:inset 0 0 0 1px #eef0f4"></div><svg style="left:196px;top:425px" width="9" height="9" viewBox="0 0 9 9"><path d="M1.2 4.5 L3.8 7.3 L8.2 1.5" stroke="#000" stroke-width="2" fill="none"/></svg><div class="t" style="left:210px;top:423px;font-size:11px;color:#000;">Broken-off bonds (polymers)</div><div class="a" style="left:41px;top:444px;width:13px;height:13px;background:#fff;border:1px solid #8e99ab;box-shadow:inset 0 0 0 1px #eef0f4"></div><svg style="left:43px;top:446px" width="9" height="9" viewBox="0 0 9 9"><path d="M1.2 4.5 L3.8 7.3 L8.2 1.5" stroke="#000" stroke-width="2" fill="none"/></svg><div class="t" style="left:57px;top:444px;font-size:11px;color:#000;">Automatic centering</div><div class="a" style="left:41px;top:467px;width:315px;height:18px;background:#3e5378"></div><svg style="left:46px;top:473px" width="9" height="5" viewBox="0 0 9 5"><path d="M0 0 H9 L4.5 5 Z" fill="#fff"/></svg><div class="t" style="left:57px;top:469px;font-size:12px;color:#fff;">Picture design</div><div class="t" style="left:41px;top:493px;font-size:11px;color:#000;">Scheme:</div><div class="a" style="left:101px;top:490px;width:256px;height:21px;background:#fff;border:1px solid #a3a8b0"></div><div class="a" style="left:341px;top:491px;width:1px;height:19px;background:#c9ccd1"></div><svg style="left:346px;top:499px" width="7" height="4" viewBox="0 0 7 4"><path d="M0 0 H7 L3.5 4 Z" fill="#000"/></svg><div class="t" style="left:41px;top:519px;font-size:11px;color:#000;">Layout:</div><div class="a" style="left:101px;top:516px;width:256px;height:21px;background:#fff;border:1px solid #a3a8b0"></div><div class="a" style="left:341px;top:517px;width:1px;height:19px;background:#c9ccd1"></div><svg style="left:346px;top:525px" width="7" height="4" viewBox="0 0 7 4"><path d="M0 0 H7 L3.5 4 Z" fill="#000"/></svg><div class="t" style="left:104px;top:520px;font-size:11px;color:#000;">(No changes)</div><div class="a" style="left:194px;top:543px;width:162px;height:22px;background:#a9c8ee;border:1px solid #86a6d4"></div><div class="t" style="left:240px;top:547px;font-size:11px;color:#000;">Background...</div><div class="t" style="left:41px;top:573px;font-size:11px;color:#000;">Model etc.:</div><div class="a" style="left:101px;top:570px;width:256px;height:21px;background:#fff;border:1px solid #a3a8b0"></div><div class="a" style="left:341px;top:571px;width:1px;height:19px;background:#c9ccd1"></div><svg style="left:346px;top:579px" width="7" height="4" viewBox="0 0 7 4"><path d="M0 0 H7 L3.5 4 Z" fill="#000"/></svg><div class="t" style="left:104px;top:574px;font-size:11px;color:#000;">Balls and sticks</div><div class="t" style="left:41px;top:599px;font-size:11px;color:#000;">Format:</div><div class="a" style="left:101px;top:596px;width:256px;height:21px;background:#fff;border:1px solid #a3a8b0"></div><div class="a" style="left:341px;top:597px;width:1px;height:19px;background:#c9ccd1"></div><svg style="left:346px;top:605px" width="7" height="4" viewBox="0 0 7 4"><path d="M0 0 H7 L3.5 4 Z" fill="#000"/></svg><div class="t" style="left:104px;top:600px;font-size:11px;color:#000;">Rendered (highest quality)</div><div class="a" style="left:41px;top:625px;width:13px;height:13px;background:#fff;border:1px solid #8e99ab;box-shadow:inset 0 0 0 1px #eef0f4"></div><svg style="left:43px;top:627px" width="9" height="9" viewBox="0 0 9 9"><path d="M1.2 4.5 L3.8 7.3 L8.2 1.5" stroke="#000" stroke-width="2" fill="none"/></svg><div class="t" style="left:57px;top:625px;font-size:11px;color:#000;">Avoid duplicate atom main colors</div><div class="a" style="left:41px;top:647px;width:315px;height:18px;background:#3e5378"></div><svg style="left:46px;top:653px" width="9" height="5" viewBox="0 0 9 5"><path d="M0 0 H9 L4.5 5 Z" fill="#fff"/></svg><div class="t" style="left:57px;top:649px;font-size:12px;color:#fff;">Picture viewing</div><div class="t" style="left:41px;top:673px;font-size:11px;color:#000;">Direction:</div><div class="a" style="left:101px;top:670px;width:256px;height:21px;background:#fff;border:1px solid #a3a8b0"></div><div class="a" style="left:341px;top:671px;width:1px;height:19px;background:#c9ccd1"></div><svg style="left:346px;top:679px" width="7" height="4" viewBox="0 0 7 4"><path d="M0 0 H7 L3.5 4 Z" fill="#000"/></svg><div class="t" style="left:104px;top:674px;font-size:11px;color:#000;">"Best projection"</div><div class="t" style="left:122px;top:700px;font-size:11px;color:#9aa0a8;">u:</div><div class="a" style="left:138px;top:696px;width:59px;height:23px;background:#e4e6e9;border:1px solid #b9bdc3"></div><div class="t" style="left:202px;top:700px;font-size:11px;color:#9aa0a8;">v:</div><div class="a" style="left:215px;top:696px;width:60px;height:23px;background:#e4e6e9;border:1px solid #b9bdc3"></div><div class="t" style="left:280px;top:700px;font-size:11px;color:#9aa0a8;">w:</div><div class="a" style="left:296px;top:696px;width:60px;height:23px;background:#e4e6e9;border:1px solid #b9bdc3"></div><div class="t" style="left:41px;top:726px;font-size:11px;color:#000;">Tilt along x-axis [°]:</div><div class="a" style="left:138px;top:722px;width:59px;height:23px;background:#fff;border:1px solid #a3a8b0"></div><div class="t" style="left:143px;top:727px;font-size:11px;color:#000;">0</div><div class="t" style="left:224px;top:726px;font-size:11px;color:#000;">... y-axis [°]:</div><div class="a" style="left:296px;top:722px;width:60px;height:23px;background:#fff;border:1px solid #a3a8b0"></div><div class="t" style="left:301px;top:727px;font-size:11px;color:#000;">0</div><div class="t" style="left:41px;top:753px;font-size:11px;color:#000;">Projection:</div><div class="a" style="left:101px;top:750px;width:256px;height:21px;background:#fff;border:1px solid #a3a8b0"></div><div class="a" style="left:341px;top:751px;width:1px;height:19px;background:#c9ccd1"></div><svg style="left:346px;top:759px" width="7" height="4" viewBox="0 0 7 4"><path d="M0 0 H7 L3.5 4 Z" fill="#000"/></svg><div class="t" style="left:104px;top:754px;font-size:11px;color:#000;">(No change)</div><div class="a" style="left:41px;top:779px;width:13px;height:13px;background:#fff;border:1px solid #8e99ab;box-shadow:inset 0 0 0 1px #eef0f4"></div><svg style="left:43px;top:781px" width="9" height="9" viewBox="0 0 9 9"><path d="M1.2 4.5 L3.8 7.3 L8.2 1.5" stroke="#000" stroke-width="2" fill="none"/></svg><div class="t" style="left:57px;top:779px;font-size:11px;color:#000;">Automatic adjustment of structure picture in drawing area</div>
<div class="a" style="left:370px;top:79px;width:1302px;height:723px;background:#f0f0f0"></div><div class="a" style="left:370px;top:80px;width:1300px;height:192px;background:#fff;border:1px solid #a0a0a0;border-bottom:none"></div><div class="a" style="left:371px;top:81px;width:21px;height:190px;background:#f0f0f0;border-right:1px solid #a0a0a0"></div><svg style="left:377px;top:87px" width="10" height="9" viewBox="0 0 10 9"><path d="M0.5 0.5 L9.5 8.5 M9.5 0.5 L0.5 8.5" stroke="#7a7a7a" stroke-width="2"/></svg><svg style="left:377px;top:256px" width="10" height="10" viewBox="0 0 10 10"><path d="M1 1 L9 9 M1 1 H6 M1 1 V6" stroke="#7a7a7a" stroke-width="1.8" fill="none"/></svg><div class="a" style="left:392px;top:81px;width:1261px;height:20px;background:linear-gradient(#fff 0,#fff 45%,#f2f3f5 50%,#f0f1f3);border-bottom:1px solid #d5d5d5"></div><div class="a" style="left:451px;top:82px;width:1px;height:18px;background:#e3e5e8"></div><div class="t" style="left:398px;top:85px;font-size:11.6px;color:#000;letter-spacing:-0.1px">No.</div><div class="a" style="left:570px;top:82px;width:1px;height:18px;background:#e3e5e8"></div><div class="t" style="left:458px;top:85px;font-size:11.6px;color:#000;letter-spacing:-0.1px">Title</div><div class="a" style="left:630px;top:82px;width:1px;height:18px;background:#e3e5e8"></div><div class="t" style="left:571px;top:85px;width:54px;text-align:right;font-size:11.6px;letter-spacing:-0.1px">Pics</div><div class="a" style="left:691px;top:82px;width:1px;height:18px;background:#e3e5e8"></div><div class="t" style="left:637px;top:85px;font-size:11.6px;color:#000;letter-spacing:-0.1px">Code</div><div class="a" style="left:811px;top:82px;width:1px;height:18px;background:#e3e5e8"></div><div class="t" style="left:698px;top:85px;font-size:11.6px;color:#000;letter-spacing:-0.1px">Formula sum</div><div class="a" style="left:930px;top:82px;width:1px;height:18px;background:#e3e5e8"></div><div class="t" style="left:818px;top:85px;font-size:11.6px;color:#000;letter-spacing:-0.1px">HM symbol</div><div class="a" style="left:990px;top:82px;width:1px;height:18px;background:#e3e5e8"></div><div class="t" style="left:931px;top:85px;width:54px;text-align:right;font-size:11.6px;letter-spacing:-0.1px">SGR no.</div><div class="a" style="left:1239px;top:82px;width:1px;height:18px;background:#e3e5e8"></div><div class="t" style="left:997px;top:85px;font-size:11.6px;color:#000;letter-spacing:-0.1px">Cell parameters</div><div class="a" style="left:392px;top:102px;width:1261px;height:169px;overflow:hidden"><div class="a" style="left:20px;top:0px;width:40px;height:19px;background:#a8d6fb"></div><svg style="left:5px;top:2px" width="13" height="13" viewBox="0 0 13 13"><rect x="0" y="0" width="13" height="13" fill="#fff"/><path d="M0.5 0 V13 M0 0.5 H13" stroke="#555" stroke-width="1" stroke-dasharray="1 0.5" opacity="0.6"/><path d="M3.5 0 V13 M0 3.5 H13" stroke="#555" stroke-width="1" stroke-dasharray="1 0.5" opacity="0.6"/><path d="M6.5 0 V13 M0 6.5 H13" stroke="#555" stroke-width="1" stroke-dasharray="1 0.5" opacity="0.6"/><path d="M9.5 0 V13 M0 9.5 H13" stroke="#555" stroke-width="1" stroke-dasharray="1 0.5" opacity="0.6"/><path d="M12.5 0 V13 M0 12.5 H13" stroke="#555" stroke-width="1" stroke-dasharray="1 0.5" opacity="0.6"/></svg><div class="t" style="left:23px;top:2px;font-size:11px;color:#000;letter-spacing:-0.25px">1</div><div class="t" style="left:66px;top:2px;font-size:11px;color:#000;letter-spacing:-0.25px">2040764</div><div class="t" style="left:179px;top:2px;width:54px;text-align:right;font-size:11px">1</div><div class="t" style="left:245px;top:2px;font-size:11px;color:#000;letter-spacing:-0.25px">2040764</div><div class="t" style="left:306px;top:2px;font-size:11px;color:#000;letter-spacing:-0.25px">O11V6</div><div class="t" style="left:426px;top:2px;font-size:11px;color:#000;letter-spacing:-0.25px">P -1</div><div class="t" style="left:539px;top:2px;width:55px;text-align:right;font-size:11px;letter-spacing:-0.25px">2</div><div class="t" style="left:606px;top:2px;font-size:11px;color:#000;letter-spacing:-0.25px">5.448,6.998,30.063,41.00,72.50,108.90</div><div class="a" style="left:20px;top:19px;width:40px;height:19px;background:#a8dcbf"></div><svg style="left:5px;top:21px" width="13" height="13" viewBox="0 0 13 13"><rect x="0" y="0" width="13" height="13" fill="#fff"/><path d="M0.5 0 V13 M0 0.5 H13" stroke="#555" stroke-width="1" stroke-dasharray="1 0.5" opacity="0.6"/><path d="M3.5 0 V13 M0 3.5 H13" stroke="#555" stroke-width="1" stroke-dasharray="1 0.5" opacity="0.6"/><path d="M6.5 0 V13 M0 6.5 H13" stroke="#555" stroke-width="1" stroke-dasharray="1 0.5" opacity="0.6"/><path d="M9.5 0 V13 M0 9.5 H13" stroke="#555" stroke-width="1" stroke-dasharray="1 0.5" opacity="0.6"/><path d="M12.5 0 V13 M0 12.5 H13" stroke="#555" stroke-width="1" stroke-dasharray="1 0.5" opacity="0.6"/></svg><div class="t" style="left:23px;top:21px;font-size:11px;color:#000;letter-spacing:-0.25px">2</div><div class="t" style="left:66px;top:21px;font-size:11px;color:#000;letter-spacing:-0.25px">2040765</div><div class="t" style="left:179px;top:21px;width:54px;text-align:right;font-size:11px">1</div><div class="t" style="left:245px;top:21px;font-size:11px;color:#000;letter-spacing:-0.25px">2040765</div><div class="t" style="left:306px;top:21px;font-size:11px;color:#000;letter-spacing:-0.25px">O13V7</div><div class="t" style="left:426px;top:21px;font-size:11px;color:#000;letter-spacing:-0.25px">P -1</div><div class="t" style="left:539px;top:21px;width:55px;text-align:right;font-size:11px;letter-spacing:-0.25px">2</div><div class="t" style="left:606px;top:21px;font-size:11px;color:#000;letter-spacing:-0.25px">5.439,7.005,35.516,40.90,72.60,109.00</div><div class="a" style="left:20px;top:38px;width:40px;height:19px;background:#f8dd72"></div><svg style="left:5px;top:40px" width="13" height="13" viewBox="0 0 13 13"><rect x="0" y="0" width="13" height="13" fill="#fff"/><path d="M0.5 0 V13 M0 0.5 H13" stroke="#555" stroke-width="1" stroke-dasharray="1 0.5" opacity="0.6"/><path d="M3.5 0 V13 M0 3.5 H13" stroke="#555" stroke-width="1" stroke-dasharray="1 0.5" opacity="0.6"/><path d="M6.5 0 V13 M0 6.5 H13" stroke="#555" stroke-width="1" stroke-dasharray="1 0.5" opacity="0.6"/><path d="M9.5 0 V13 M0 9.5 H13" stroke="#555" stroke-width="1" stroke-dasharray="1 0.5" opacity="0.6"/><path d="M12.5 0 V13 M0 12.5 H13" stroke="#555" stroke-width="1" stroke-dasharray="1 0.5" opacity="0.6"/></svg><div class="t" style="left:23px;top:40px;font-size:11px;color:#000;letter-spacing:-0.25px">3</div><div class="t" style="left:66px;top:40px;font-size:11px;color:#000;letter-spacing:-0.25px">452452</div><div class="t" style="left:179px;top:40px;width:54px;text-align:right;font-size:11px">1</div><div class="t" style="left:245px;top:40px;font-size:11px;color:#000;letter-spacing:-0.25px">452452</div><div class="t" style="left:306px;top:40px;font-size:11px;color:#000;letter-spacing:-0.25px">O9V5</div><div class="t" style="left:426px;top:40px;font-size:11px;color:#000;letter-spacing:-0.25px">P -1</div><div class="t" style="left:539px;top:40px;width:55px;text-align:right;font-size:11px;letter-spacing:-0.25px">2</div><div class="t" style="left:606px;top:40px;font-size:11px;color:#000;letter-spacing:-0.25px">5.472,7.003,8.727,97.49,112.40,109.01</div><div class="a" style="left:20px;top:57px;width:40px;height:19px;background:#d7c3f5"></div><svg style="left:5px;top:59px" width="13" height="13" viewBox="0 0 13 13"><rect x="0" y="0" width="13" height="13" fill="#fff"/><path d="M0.5 0 V13 M0 0.5 H13" stroke="#555" stroke-width="1" stroke-dasharray="1 0.5" opacity="0.6"/><path d="M3.5 0 V13 M0 3.5 H13" stroke="#555" stroke-width="1" stroke-dasharray="1 0.5" opacity="0.6"/><path d="M6.5 0 V13 M0 6.5 H13" stroke="#555" stroke-width="1" stroke-dasharray="1 0.5" opacity="0.6"/><path d="M9.5 0 V13 M0 9.5 H13" stroke="#555" stroke-width="1" stroke-dasharray="1 0.5" opacity="0.6"/><path d="M12.5 0 V13 M0 12.5 H13" stroke="#555" stroke-width="1" stroke-dasharray="1 0.5" opacity="0.6"/></svg><div class="t" style="left:23px;top:59px;font-size:11px;color:#000;letter-spacing:-0.25px">4</div><div class="t" style="left:66px;top:59px;font-size:11px;color:#000;letter-spacing:-0.25px">452453</div><div class="t" style="left:179px;top:59px;width:54px;text-align:right;font-size:11px">1</div><div class="t" style="left:245px;top:59px;font-size:11px;color:#000;letter-spacing:-0.25px">452453</div><div class="t" style="left:306px;top:59px;font-size:11px;color:#000;letter-spacing:-0.25px">O9V5</div><div class="t" style="left:426px;top:59px;font-size:11px;color:#000;letter-spacing:-0.25px">P -1</div><div class="t" style="left:539px;top:59px;width:55px;text-align:right;font-size:11px;letter-spacing:-0.25px">2</div><div class="t" style="left:606px;top:59px;font-size:11px;color:#000;letter-spacing:-0.25px">5.467,7.007,8.735,97.40,112.31,109.11</div><div class="a" style="left:0;top:76px;width:848px;height:19px;background:#ececec"></div><svg style="left:5px;top:78px" width="13" height="13" viewBox="0 0 13 13"><rect x="0" y="0" width="13" height="13" fill="#c8dcf8"/><path d="M0.5 0 V13 M0 0.5 H13" stroke="#3a6ad0" stroke-width="1" stroke-dasharray="1 0.5" opacity="0.6"/><path d="M3.5 0 V13 M0 3.5 H13" stroke="#3a6ad0" stroke-width="1" stroke-dasharray="1 0.5" opacity="0.6"/><path d="M6.5 0 V13 M0 6.5 H13" stroke="#3a6ad0" stroke-width="1" stroke-dasharray="1 0.5" opacity="0.6"/><path d="M9.5 0 V13 M0 9.5 H13" stroke="#3a6ad0" stroke-width="1" stroke-dasharray="1 0.5" opacity="0.6"/><path d="M12.5 0 V13 M0 12.5 H13" stroke="#3a6ad0" stroke-width="1" stroke-dasharray="1 0.5" opacity="0.6"/></svg><div class="t" style="left:23px;top:78px;font-size:11px;color:#000;letter-spacing:-0.25px">5</div><div class="t" style="left:66px;top:78px;font-size:11px;color:#000;letter-spacing:-0.25px">455496</div><div class="t" style="left:179px;top:78px;width:54px;text-align:right;font-size:11px">1</div><div class="t" style="left:245px;top:78px;font-size:11px;color:#000;letter-spacing:-0.25px">455496</div><div class="t" style="left:306px;top:78px;font-size:11px;color:#000;letter-spacing:-0.25px">O2V</div><div class="t" style="left:426px;top:78px;font-size:11px;color:#000;letter-spacing:-0.25px">C 1 2/m 1</div><div class="t" style="left:539px;top:78px;width:55px;text-align:right;font-size:11px;letter-spacing:-0.25px">12</div><div class="t" style="left:606px;top:78px;font-size:11px;color:#000;letter-spacing:-0.25px">12.152,3.720,6.347,90.00,107.58,90.00</div><div class="a" style="left:20px;top:95px;width:40px;height:19px;background:#a8dcbf"></div><svg style="left:5px;top:97px" width="13" height="13" viewBox="0 0 13 13"><rect x="0" y="0" width="13" height="13" fill="#fff"/><path d="M0.5 0 V13 M0 0.5 H13" stroke="#555" stroke-width="1" stroke-dasharray="1 0.5" opacity="0.6"/><path d="M3.5 0 V13 M0 3.5 H13" stroke="#555" stroke-width="1" stroke-dasharray="1 0.5" opacity="0.6"/><path d="M6.5 0 V13 M0 6.5 H13" stroke="#555" stroke-width="1" stroke-dasharray="1 0.5" opacity="0.6"/><path d="M9.5 0 V13 M0 9.5 H13" stroke="#555" stroke-width="1" stroke-dasharray="1 0.5" opacity="0.6"/><path d="M12.5 0 V13 M0 12.5 H13" stroke="#555" stroke-width="1" stroke-dasharray="1 0.5" opacity="0.6"/></svg><div class="t" style="left:23px;top:97px;font-size:11px;color:#000;letter-spacing:-0.25px">6</div><div class="t" style="left:66px;top:97px;font-size:11px;color:#000;letter-spacing:-0.25px">541661</div><div class="t" style="left:179px;top:97px;width:54px;text-align:right;font-size:11px">1</div><div class="t" style="left:245px;top:97px;font-size:11px;color:#000;letter-spacing:-0.25px">541661</div><div class="t" style="left:306px;top:97px;font-size:11px;color:#000;letter-spacing:-0.25px">O7V4</div><div class="t" style="left:426px;top:97px;font-size:11px;color:#000;letter-spacing:-0.25px">A1-</div><div class="t" style="left:539px;top:97px;width:55px;text-align:right;font-size:11px;letter-spacing:-0.25px">2</div><div class="t" style="left:606px;top:97px;font-size:11px;color:#000;letter-spacing:-0.25px">5.509,7.008,12.258,95.09,95.19,109.21</div><div class="a" style="left:20px;top:114px;width:40px;height:19px;background:#f8dd72"></div><svg style="left:5px;top:116px" width="13" height="13" viewBox="0 0 13 13"><rect x="0" y="0" width="13" height="13" fill="#fff"/><path d="M0.5 0 V13 M0 0.5 H13" stroke="#555" stroke-width="1" stroke-dasharray="1 0.5" opacity="0.6"/><path d="M3.5 0 V13 M0 3.5 H13" stroke="#555" stroke-width="1" stroke-dasharray="1 0.5" opacity="0.6"/><path d="M6.5 0 V13 M0 6.5 H13" stroke="#555" stroke-width="1" stroke-dasharray="1 0.5" opacity="0.6"/><path d="M9.5 0 V13 M0 9.5 H13" stroke="#555" stroke-width="1" stroke-dasharray="1 0.5" opacity="0.6"/><path d="M12.5 0 V13 M0 12.5 H13" stroke="#555" stroke-width="1" stroke-dasharray="1 0.5" opacity="0.6"/></svg><div class="t" style="left:23px;top:116px;font-size:11px;color:#000;letter-spacing:-0.25px">7</div><div class="t" style="left:66px;top:116px;font-size:11px;color:#000;letter-spacing:-0.25px">541662</div><div class="t" style="left:179px;top:116px;width:54px;text-align:right;font-size:11px">1</div><div class="t" style="left:245px;top:116px;font-size:11px;color:#000;letter-spacing:-0.25px">541662</div><div class="t" style="left:306px;top:116px;font-size:11px;color:#000;letter-spacing:-0.25px">O7V4</div><div class="t" style="left:426px;top:116px;font-size:11px;color:#000;letter-spacing:-0.25px">A1-</div><div class="t" style="left:539px;top:116px;width:55px;text-align:right;font-size:11px;letter-spacing:-0.25px">2</div><div class="t" style="left:606px;top:116px;font-size:11px;color:#000;letter-spacing:-0.25px">5.514,7.004,12.260,94.86,95.14,109.30</div><div class="a" style="left:20px;top:133px;width:40px;height:19px;background:#d7c3f5"></div><svg style="left:5px;top:135px" width="13" height="13" viewBox="0 0 13 13"><rect x="0" y="0" width="13" height="13" fill="#fff"/><path d="M0.5 0 V13 M0 0.5 H13" stroke="#555" stroke-width="1" stroke-dasharray="1 0.5" opacity="0.6"/><path d="M3.5 0 V13 M0 3.5 H13" stroke="#555" stroke-width="1" stroke-dasharray="1 0.5" opacity="0.6"/><path d="M6.5 0 V13 M0 6.5 H13" stroke="#555" stroke-width="1" stroke-dasharray="1 0.5" opacity="0.6"/><path d="M9.5 0 V13 M0 9.5 H13" stroke="#555" stroke-width="1" stroke-dasharray="1 0.5" opacity="0.6"/><path d="M12.5 0 V13 M0 12.5 H13" stroke="#555" stroke-width="1" stroke-dasharray="1 0.5" opacity="0.6"/></svg><div class="t" style="left:23px;top:135px;font-size:11px;color:#000;letter-spacing:-0.25px">8</div><div class="t" style="left:66px;top:135px;font-size:11px;color:#000;letter-spacing:-0.25px">541670</div><div class="t" style="left:179px;top:135px;width:54px;text-align:right;font-size:11px">1</div><div class="t" style="left:245px;top:135px;font-size:11px;color:#000;letter-spacing:-0.25px">541670</div><div class="t" style="left:306px;top:135px;font-size:11px;color:#000;letter-spacing:-0.25px">O2V</div><div class="t" style="left:426px;top:135px;font-size:11px;color:#000;letter-spacing:-0.25px">C 1 2/m 1</div><div class="t" style="left:539px;top:135px;width:55px;text-align:right;font-size:11px;letter-spacing:-0.25px">12</div><div class="t" style="left:606px;top:135px;font-size:11px;color:#000;letter-spacing:-0.25px">12.030,3.693,6.420,90.00,106.60,90.00</div><div class="a" style="left:20px;top:152px;width:40px;height:19px;background:#a8d6fb"></div><svg style="left:5px;top:154px" width="13" height="13" viewBox="0 0 13 13"><rect x="0" y="0" width="13" height="13" fill="#fff"/><path d="M0.5 0 V13 M0 0.5 H13" stroke="#555" stroke-width="1" stroke-dasharray="1 0.5" opacity="0.6"/><path d="M3.5 0 V13 M0 3.5 H13" stroke="#555" stroke-width="1" stroke-dasharray="1 0.5" opacity="0.6"/><path d="M6.5 0 V13 M0 6.5 H13" stroke="#555" stroke-width="1" stroke-dasharray="1 0.5" opacity="0.6"/><path d="M9.5 0 V13 M0 9.5 H13" stroke="#555" stroke-width="1" stroke-dasharray="1 0.5" opacity="0.6"/><path d="M12.5 0 V13 M0 12.5 H13" stroke="#555" stroke-width="1" stroke-dasharray="1 0.5" opacity="0.6"/></svg><div class="t" style="left:23px;top:154px;font-size:11px;color:#000;letter-spacing:-0.25px">9</div><div class="t" style="left:66px;top:154px;font-size:11px;color:#000;letter-spacing:-0.25px">542477</div><div class="t" style="left:179px;top:154px;width:54px;text-align:right;font-size:11px">1</div><div class="t" style="left:245px;top:154px;font-size:11px;color:#000;letter-spacing:-0.25px">542477</div><div class="t" style="left:306px;top:154px;font-size:11px;color:#000;letter-spacing:-0.25px">O3V2</div><div class="t" style="left:426px;top:154px;font-size:11px;color:#000;letter-spacing:-0.25px">R -3 c</div><div class="t" style="left:539px;top:154px;width:55px;text-align:right;font-size:11px;letter-spacing:-0.25px">167</div><div class="t" style="left:606px;top:154px;font-size:11px;color:#000;letter-spacing:-0.25px">4.953,4.953,14.006,90.00,90.00,120.00</div></div><div class="a" style="left:1653px;top:81px;width:17px;height:190px;background:#f0f0f0;border-left:1px solid #f8f8f8"></div><svg style="left:1658px;top:88px" width="7" height="4" viewBox="0 0 7 4"><path d="M0 4 H7 L3.5 0 Z" fill="#404040"/></svg><svg style="left:1658px;top:261px" width="7" height="4" viewBox="0 0 7 4"><path d="M0 0 H7 L3.5 4 Z" fill="#404040"/></svg><div class="a" style="left:1655px;top:98px;width:14px;height:0px"></div><div class="a" style="left:1655px;top:99px;width:14px;height:60px;background:linear-gradient(90deg,#eaeaea,#dcdcdc);border:1px solid #a8a8a8;border-radius:2px"></div><svg style="left:1658px;top:127px" width="7" height="5" viewBox="0 0 7 5"><path d="M0 0.5 H7 M0 2.5 H7 M0 4.5 H7" stroke="#555"/></svg>
<div class="a" style="left:370px;top:276px;width:782px;height:526px;background:#fff;border-left:1px solid #fff"></div><div class="a" style="left:371px;top:277px;width:781px;height:525px;border:1px solid #a0a0a0;border-right-color:#f4f4f4;background:#f0f0f0"></div><div class="a" style="left:372px;top:278px;width:779px;height:26px;background:#f0f0f0"></div><svg style="left:377px;top:287px" width="10" height="8" viewBox="0 0 10 8"><rect x="0" y="0" width="4" height="3" fill="#777"/><rect x="6" y="0" width="4" height="3" fill="#777"/><rect x="0" y="5" width="4" height="3" fill="#777"/><rect x="6" y="5" width="4" height="3" fill="#777"/></svg><div class="a" style="left:372px;top:302px;width:779px;height:2px;background:#a9d4f8"></div><div class="a" style="left:372px;top:304px;width:779px;height:1px;background:#10141c"></div><div class="a" style="left:546px;top:282px;width:148px;height:20px;background:linear-gradient(#a9d9bb,#a3d2b4);border:1px solid #b0b0b0;border-bottom:none;border-top-color:#d8d8d8"></div><div class="t" style="left:546px;top:286px;width:148px;text-align:center;font-size:11px;color:#111;letter-spacing:-0.2px">1250003 :: Picture 1</div><div class="a" style="left:695px;top:282px;width:144px;height:20px;background:linear-gradient(#d6c2f3,#cdb8ee);border:1px solid #b0b0b0;border-bottom:none;border-top-color:#d8d8d8"></div><div class="t" style="left:695px;top:286px;width:144px;text-align:center;font-size:11px;color:#111;letter-spacing:-0.2px">541670 :: Picture 1</div><div class="a" style="left:840px;top:282px;width:144px;height:20px;background:linear-gradient(#b3d8f7,#9cc8ee);border:1px solid #b0b0b0;border-bottom:none;border-top-color:#d8d8d8"></div><div class="t" style="left:840px;top:286px;width:144px;text-align:center;font-size:11px;color:#111;letter-spacing:-0.2px">542477 :: Picture 1</div><div class="a" style="left:397px;top:279px;width:149px;height:25px;background:linear-gradient(#ddeefe,#c0e0fb 50%,#a8d3f8);border:1px solid #a0a0a0;border-bottom:none;border-top-color:#b8b8b8"></div><div class="t" style="left:397px;top:285px;width:149px;text-align:center;font-size:11px;color:#111;letter-spacing:-0.15px">455496 :: Picture 1</div><div class="a" style="left:992px;top:281px;width:37px;height:21px;border:1px solid #b8b8b8;border-bottom:none;background:linear-gradient(#f6f6f6,#e8e8e8)"></div><div class="a" style="left:1030px;top:281px;width:22px;height:21px;border:1px solid #b8b8b8;border-bottom:none;background:linear-gradient(#f6f6f6,#e8e8e8)"></div><div class="a" style="left:1053px;top:281px;width:16px;height:21px;border:1px solid #b8b8b8;border-bottom:none;background:linear-gradient(#f6f6f6,#e8e8e8)"></div><svg style="left:996px;top:284px" width="16" height="16" viewBox="0 0 16 16"><rect x="1.5" y="3.5" width="14" height="12" fill="#e4f0fc" stroke="#2a3c6a"/><rect x="2" y="4" width="13" height="2" fill="#3a64c8"/><circle cx="4" cy="4" r="3" fill="#ffe860"/></svg><svg style="left:1016px;top:291px" width="7" height="4" viewBox="0 0 7 4"><path d="M0 0 H7 L3.5 4 Z" fill="#9a9a9a"/></svg><svg style="left:1034px;top:285px" width="16" height="13" viewBox="0 0 16 13"><rect x="0.5" y="0.5" width="8" height="12" fill="#e4f0fc" stroke="#666"/><rect x="10.5" y="0.5" width="5" height="5" fill="#fff" stroke="#666"/><rect x="10.5" y="7.5" width="5" height="5" fill="#fff" stroke="#666"/></svg><svg style="left:1057px;top:285px" width="8" height="13" viewBox="0 0 8 13"><path d="M0 0.5 H8 M0 2.5 H8 M0 4.5 H8 M0 6.5 H8" stroke="#222"/><path d="M0 9 H8 L4 13 Z" fill="#2a3c6a"/></svg><svg style="left:1136px;top:288px" width="11" height="10" viewBox="0 0 11 10"><path d="M1 1 L5 5 L1 9 M6 1 L10 5 L6 9" stroke="#7a7a7a" stroke-width="2" fill="none"/></svg><div class="a" style="left:372px;top:305px;width:779px;height:371px;background:linear-gradient(#fff,#f0f0f0 40%,#c8c8c8)"></div><div class="a" style="left:380px;top:313px;width:551px;height:354px;background:#c0ddf8;border:1px solid #9a9a9a;border-radius:4px 4px 0 4px;box-shadow:inset 0 0 0 1px #fff"></div><div class="a" style="left:401px;top:334px;width:510px;height:312px;background:#000;border:1px solid #9a9a9a;box-shadow:inset 0 0 0 1px #fff"></div><svg style="left:0;top:0" width="1679" height="856" viewBox="0 0 1679 856"><defs><radialGradient id="gO" cx="0.35" cy="0.3" r="0.7"><stop offset="0" stop-color="#ffb0b0"/><stop offset="0.25" stop-color="#f01010"/><stop offset="1" stop-color="#900000"/></radialGradient><radialGradient id="gV" cx="0.4" cy="0.35" r="0.7"><stop offset="0" stop-color="#ffffff"/><stop offset="0.5" stop-color="#d8d8d8"/><stop offset="1" stop-color="#7a7a7a"/></radialGradient></defs><path d="M493.5 421.5 H773.5 L816.5 559.5 H537.5 Z" fill="none" stroke="#fff" stroke-width="1"/><line x1="534.5" y1="466" x2="588.5" y2="459" stroke="#dc9c2c" stroke-width="1.7"/><line x1="591.5" y1="421.5" x2="588.5" y2="459" stroke="#dc9c2c" stroke-width="1.7"/><line x1="534.5" y1="466" x2="582" y2="521.5" stroke="#dc9c2c" stroke-width="1.7"/><line x1="588.5" y1="459" x2="606" y2="480" stroke="#dc9c2c" stroke-width="1.7"/><line x1="631.5" y1="469" x2="674.5" y2="466" stroke="#dc9c2c" stroke-width="1.7"/><line x1="674.5" y1="466" x2="728" y2="458" stroke="#dc9c2c" stroke-width="1.7"/><line x1="728" y1="458" x2="731" y2="421.5" stroke="#dc9c2c" stroke-width="1.7"/><line x1="728" y1="458" x2="746" y2="480" stroke="#dc9c2c" stroke-width="1.7"/><line x1="582" y1="521.5" x2="635.5" y2="515.5" stroke="#dc9c2c" stroke-width="1.7"/><line x1="635.5" y1="515.5" x2="680" y2="512" stroke="#dc9c2c" stroke-width="1.7"/><line x1="721" y1="521.5" x2="775.5" y2="514" stroke="#dc9c2c" stroke-width="1.7"/><line x1="582" y1="521.5" x2="579" y2="559" stroke="#dc9c2c" stroke-width="1.7"/><line x1="721" y1="521.5" x2="718" y2="559" stroke="#dc9c2c" stroke-width="1.7"/><line x1="674.5" y1="466" x2="667" y2="478" stroke="#dc9c2c" stroke-width="1.7"/><line x1="674.5" y1="466" x2="682" y2="478" stroke="#dc9c2c" stroke-width="1.7"/><line x1="536.5" y1="399" x2="535.5" y2="414" stroke="#e0a030" stroke-width="2" stroke-dasharray="2.5 2"/><line x1="675.5" y1="399" x2="674.5" y2="414" stroke="#e0a030" stroke-width="2" stroke-dasharray="2.5 2"/><line x1="635.3" y1="567" x2="633.7" y2="582" stroke="#e0a030" stroke-width="2" stroke-dasharray="2.5 2"/><line x1="774.6" y1="567" x2="773.4" y2="582" stroke="#e0a030" stroke-width="2" stroke-dasharray="2.5 2"/><line x1="506" y1="467" x2="528" y2="467" stroke="#e0a030" stroke-width="2" stroke-dasharray="2.5 2"/><line x1="511" y1="496" x2="527.5" y2="476" stroke="#e0a030" stroke-width="2" stroke-dasharray="2.5 2"/><line x1="514" y1="512" x2="532" y2="512" stroke="#e0a030" stroke-width="2" stroke-dasharray="2.5 2"/><line x1="780" y1="468" x2="797" y2="468" stroke="#e0a030" stroke-width="2" stroke-dasharray="2.5 2"/><line x1="787" y1="500" x2="801" y2="483" stroke="#e0a030" stroke-width="2" stroke-dasharray="2.5 2"/><line x1="784" y1="512.5" x2="803" y2="512.5" stroke="#e0a030" stroke-width="2" stroke-dasharray="2.5 2"/><circle cx="534" cy="420" r="6" fill="url(#gO)"/><circle cx="592" cy="421.5" r="6" fill="url(#gO)"/><circle cx="674" cy="420" r="6" fill="url(#gO)"/><circle cx="731" cy="421.5" r="6" fill="url(#gO)"/><circle cx="583.5" cy="470.5" r="6" fill="url(#gO)"/><circle cx="631.5" cy="469" r="6" fill="url(#gO)"/><circle cx="722.5" cy="469.5" r="6" fill="url(#gO)"/><circle cx="771" cy="469" r="6" fill="url(#gO)"/><circle cx="538.5" cy="511.5" r="6" fill="url(#gO)"/><circle cx="587" cy="510.5" r="6" fill="url(#gO)"/><circle cx="678" cy="512.5" r="6" fill="url(#gO)"/><circle cx="728" cy="512.5" r="6" fill="url(#gO)"/><circle cx="579" cy="559" r="6" fill="url(#gO)"/><circle cx="635.5" cy="560.5" r="6" fill="url(#gO)"/><circle cx="718" cy="559" r="6" fill="url(#gO)"/><circle cx="774.5" cy="560.5" r="6" fill="url(#gO)"/><circle cx="534.5" cy="466" r="8.5" fill="url(#gV)"/><circle cx="588.5" cy="459" r="8.5" fill="url(#gV)"/><circle cx="674.5" cy="466" r="8.5" fill="url(#gV)"/><circle cx="728" cy="458" r="8.5" fill="url(#gV)"/><circle cx="582" cy="521.5" r="8.5" fill="url(#gV)"/><circle cx="635.5" cy="515.5" r="8.5" fill="url(#gV)"/><circle cx="721" cy="521.5" r="8.5" fill="url(#gV)"/><circle cx="775.5" cy="514" r="8.5" fill="url(#gV)"/><circle cx="536.5" cy="465" r="6" fill="url(#gO)"/><circle cx="773.5" cy="515.5" r="6" fill="url(#gO)"/><rect x="580" y="450.5" width="18" height="17" fill="none" stroke="#e8e840" stroke-width="1"/><path d="M459 392 L451 361 M459 392 H490" stroke="#fff" stroke-width="1"/><path d="M448 356 L456 366 L449 368 Z M488 388.5 L498 392 L488 395.5 Z" fill="#fff"/><text x="441" y="350" font-family="Liberation Sans" font-size="11" fill="#fff">c</text><text x="504" y="393" font-family="Liberation Sans" font-size="11" fill="#fff">a</text><rect x="864.5" y="598.5" width="44" height="45" fill="#000" stroke="#fff" stroke-width="1.3"/><circle cx="875" cy="609" r="8.5" fill="url(#gV)"/><circle cx="875" cy="632" r="8.5" fill="url(#gO)"/><text x="883" y="613" font-family="Liberation Sans" font-size="11" fill="#fff" letter-spacing="-0.3">V+0</text><text x="883" y="636" font-family="Liberation Sans" font-size="11" fill="#fff" letter-spacing="-0.3">O+0</text></svg><div class="a" style="left:591px;top:477px;width:193px;height:33px;background:linear-gradient(#fff,#e5e8f0);border:1px solid #767676;border-radius:2px;box-shadow:1px 1px 2px rgba(0,0,0,.3)"></div><div class="t" style="left:597px;top:480px;font-size:11.6px;color:#4c4c4c;letter-spacing:-0.1px">"V(1)" (4i: m)</div><div class="t" style="left:597px;top:494px;font-size:11.3px;color:#4c4c4c;">x/a, y/b, z/c: 0.2964(3), 0, 0.7249(7)</div><div class="a" style="left:937px;top:313px;width:206px;height:354px;background:#efefef;border:1px solid #a8a8a8;border-radius:4px 4px 0 0;box-shadow:inset 0 0 0 1px #fff"></div><div class="a" style="left:1124px;top:317px;width:17px;height:346px;background:linear-gradient(90deg,#e6e6e6,#f2f2f2)"></div><svg style="left:1129px;top:323px" width="7" height="4" viewBox="0 0 7 4"><path d="M0 4 H7 L3.5 0 Z" fill="#404040"/></svg><svg style="left:1129px;top:654px" width="7" height="4" viewBox="0 0 7 4"><path d="M0 0 H7 L3.5 4 Z" fill="#404040"/></svg><div class="a" style="left:1124px;top:334px;width:15px;height:212px;background:linear-gradient(90deg,#f4f4f4,#dcdcdc);border:1px solid #a8a8a8;border-radius:2px"></div><svg style="left:1128px;top:437px" width="8" height="5" viewBox="0 0 8 5"><path d="M0 0.5 H8 M0 2.5 H8 M0 4.5 H8" stroke="#555"/></svg><div class="t" style="left:946px;top:327px;width:159px;text-align:center;font-size:12px;color:#111;letter-spacing:-0.2px">Picture 1</div><div class="a" style="left:946px;top:342px;width:160px;height:139px;background:#a8dcbc;border:1px solid #9a9a9a;box-shadow:inset 0 0 0 1px #fff"></div><div class="a" style="left:953px;top:366px;width:146px;height:92px;background:#000;border:1px solid #aaa"></div><div class="t" style="left:946px;top:497px;width:159px;text-align:center;font-size:12px;color:#111;letter-spacing:-0.2px">Picture 1</div><div class="a" style="left:946px;top:512px;width:160px;height:139px;background:#d6c0f4;border:1px solid #9a9a9a;box-shadow:inset 0 0 0 1px #fff"></div><div class="a" style="left:953px;top:536px;width:146px;height:92px;background:#000;border:1px solid #aaa"></div><svg style="left:0;top:0" width="1679" height="856" viewBox="0 0 1679 856"><path d="M957.01 385.95 L1036.45 385.95 L1094.86 438.52 L1014.84 438.52 Z" fill="none" stroke="#c0c0c0" stroke-width="1"/><line x1="977.1" y1="385.36" x2="982.71" y2="397.05" stroke="#c08828" stroke-width="1.1"/><line x1="982.71" y1="397.05" x2="994.16" y2="403.47" stroke="#c08828" stroke-width="1.1"/><line x1="988.55" y1="393.78" x2="1000.47" y2="399.97" stroke="#c08828" stroke-width="1.1"/><line x1="1000.47" y1="399.97" x2="1011.33" y2="398.8" stroke="#c08828" stroke-width="1.1"/><line x1="1011.33" y1="398.8" x2="1022.66" y2="397.05" stroke="#c08828" stroke-width="1.1"/><line x1="1016.82" y1="385.36" x2="1022.66" y2="397.05" stroke="#c08828" stroke-width="1.1"/><line x1="1022.66" y1="397.05" x2="1033.88" y2="403.47" stroke="#c08828" stroke-width="1.1"/><line x1="1029.21" y1="393.78" x2="1040.19" y2="399.97" stroke="#c08828" stroke-width="1.1"/><line x1="1000.47" y1="399.97" x2="1005.84" y2="412.0" stroke="#c08828" stroke-width="1.1"/><line x1="1005.84" y1="412.0" x2="1011.68" y2="423.33" stroke="#c08828" stroke-width="1.1"/><line x1="1040.19" y1="399.97" x2="1046.03" y2="412.0" stroke="#c08828" stroke-width="1.1"/><line x1="1046.03" y1="412.0" x2="1051.4" y2="423.33" stroke="#c08828" stroke-width="1.1"/><line x1="1011.68" y1="423.33" x2="1023.01" y2="429.76" stroke="#c08828" stroke-width="1.1"/><line x1="1018.34" y1="420.41" x2="1029.44" y2="426.6" stroke="#c08828" stroke-width="1.1"/><line x1="1029.44" y1="426.6" x2="1040.54" y2="425.08" stroke="#c08828" stroke-width="1.1"/><line x1="1040.54" y1="425.08" x2="1051.4" y2="423.33" stroke="#c08828" stroke-width="1.1"/><line x1="1051.4" y1="423.33" x2="1063.32" y2="429.76" stroke="#c08828" stroke-width="1.1"/><line x1="1058.06" y1="420.41" x2="1069.39" y2="426.6" stroke="#c08828" stroke-width="1.1"/><line x1="1029.44" y1="426.6" x2="1035.28" y2="437.93" stroke="#c08828" stroke-width="1.1"/><line x1="1069.39" y1="426.6" x2="1075.0" y2="437.93" stroke="#c08828" stroke-width="1.1"/><line x1="971.38" y1="398.57" x2="978.04" y2="397.63" stroke="#c08828" stroke-width="1.1"/><line x1="1000.82" y1="425.08" x2="1007.24" y2="424.5" stroke="#c08828" stroke-width="1.1"/><line x1="1072.66" y1="425.67" x2="1080.84" y2="425.08" stroke="#c08828" stroke-width="1.1"/><line x1="1045.79" y1="399.38" x2="1051.05" y2="398.57" stroke="#c08828" stroke-width="1.1"/><line x1="973.36" y1="377.19" x2="977.1" y2="385.36" stroke="#c08828" stroke-width="1.1" stroke-dasharray="1.2 1"/><line x1="1013.08" y1="377.19" x2="1016.82" y2="385.36" stroke="#c08828" stroke-width="1.1" stroke-dasharray="1.2 1"/><line x1="1035.28" y1="437.93" x2="1038.79" y2="446.11" stroke="#c08828" stroke-width="1.1" stroke-dasharray="1.2 1"/><line x1="1075.0" y1="437.93" x2="1078.5" y2="446.11" stroke="#c08828" stroke-width="1.1" stroke-dasharray="1.2 1"/><circle cx="969.28" cy="388.64" r="2.3" fill="url(#gO)"/><circle cx="1009.35" cy="388.64" r="2.3" fill="url(#gO)"/><circle cx="988.55" cy="393.78" r="2.3" fill="url(#gO)"/><circle cx="994.16" cy="403.47" r="2.3" fill="url(#gO)"/><circle cx="1011.33" cy="398.8" r="2.3" fill="url(#gO)"/><circle cx="1029.21" cy="393.78" r="2.3" fill="url(#gO)"/><circle cx="1033.88" cy="403.47" r="2.3" fill="url(#gO)"/><circle cx="971.38" cy="398.57" r="2.3" fill="url(#gO)"/><circle cx="1051.05" cy="398.57" r="2.3" fill="url(#gO)"/><circle cx="1013.67" cy="408.73" r="2.3" fill="url(#gO)"/><circle cx="1053.39" cy="408.73" r="2.3" fill="url(#gO)"/><circle cx="998.48" cy="415.15" r="2.3" fill="url(#gO)"/><circle cx="1038.2" cy="415.15" r="2.3" fill="url(#gO)"/><circle cx="1018.34" cy="420.41" r="2.3" fill="url(#gO)"/><circle cx="1058.06" cy="420.41" r="2.3" fill="url(#gO)"/><circle cx="1000.82" cy="425.08" r="2.3" fill="url(#gO)"/><circle cx="1040.54" cy="425.08" r="2.3" fill="url(#gO)"/><circle cx="1080.84" cy="425.08" r="2.3" fill="url(#gO)"/><circle cx="1023.01" cy="429.76" r="2.3" fill="url(#gO)"/><circle cx="1063.32" cy="429.76" r="2.3" fill="url(#gO)"/><circle cx="1042.52" cy="435.01" r="2.3" fill="url(#gO)"/><circle cx="1082.83" cy="435.01" r="2.3" fill="url(#gO)"/><circle cx="977.1" cy="385.36" r="3.3" fill="url(#gV)"/><circle cx="1016.82" cy="385.36" r="3.3" fill="url(#gV)"/><circle cx="982.71" cy="397.05" r="3.3" fill="url(#gV)"/><circle cx="1000.47" cy="399.97" r="3.3" fill="url(#gV)"/><circle cx="1022.66" cy="397.05" r="3.3" fill="url(#gV)"/><circle cx="1040.19" cy="399.97" r="3.3" fill="url(#gV)"/><circle cx="1005.84" cy="412.0" r="3.3" fill="url(#gV)"/><circle cx="1046.03" cy="412.0" r="3.3" fill="url(#gV)"/><circle cx="1011.68" cy="423.33" r="3.3" fill="url(#gV)"/><circle cx="1029.44" cy="426.6" r="3.3" fill="url(#gV)"/><circle cx="1051.4" cy="423.33" r="3.3" fill="url(#gV)"/><circle cx="1069.39" cy="426.6" r="3.3" fill="url(#gV)"/><circle cx="1035.28" cy="437.93" r="3.3" fill="url(#gV)"/><circle cx="1075.0" cy="437.93" r="3.3" fill="url(#gV)"/><path d="M957 370 L960 372 H963" stroke="#888" stroke-width=".6" fill="none"/><rect x="1093" y="453" width="4" height="3" fill="#bbb"/><path d="M969.28 556.64 L1066.82 556.64 L1082.59 606.87 L985.05 606.87 Z" fill="none" stroke="#c0c0c0" stroke-width="1"/><line x1="983.64" y1="571.82" x2="1003.74" y2="570.3" stroke="#c08828" stroke-width="1.1"/><line x1="1003.74" y1="570.3" x2="1005.49" y2="557.1" stroke="#c08828" stroke-width="1.1"/><line x1="983.64" y1="571.82" x2="985.05" y2="586.66" stroke="#c08828" stroke-width="1.1"/><line x1="1032.36" y1="571.82" x2="1052.57" y2="570.3" stroke="#c08828" stroke-width="1.1"/><line x1="1052.57" y1="570.3" x2="1053.97" y2="557.1" stroke="#c08828" stroke-width="1.1"/><line x1="1032.36" y1="571.82" x2="1019.86" y2="591.68" stroke="#c08828" stroke-width="1.1"/><line x1="1032.36" y1="571.82" x2="1033.53" y2="586.66" stroke="#c08828" stroke-width="1.1"/><line x1="1018.11" y1="577.08" x2="1019.86" y2="591.68" stroke="#c08828" stroke-width="1.1"/><line x1="999.65" y1="593.08" x2="1019.86" y2="591.68" stroke="#c08828" stroke-width="1.1"/><line x1="999.65" y1="593.08" x2="997.9" y2="606.52" stroke="#c08828" stroke-width="1.1"/><line x1="1048.13" y1="593.08" x2="1068.57" y2="591.68" stroke="#c08828" stroke-width="1.1"/><line x1="1048.13" y1="593.08" x2="1046.73" y2="606.52" stroke="#c08828" stroke-width="1.1"/><line x1="1066.82" y1="577.08" x2="1068.57" y2="591.68" stroke="#c08828" stroke-width="1.1"/><line x1="983.88" y1="548.69" x2="983.88" y2="554.53" stroke="#c08828" stroke-width="1.1" stroke-dasharray="1.2 1"/><line x1="1032.94" y1="548.69" x2="1032.94" y2="554.53" stroke="#c08828" stroke-width="1.1" stroke-dasharray="1.2 1"/><line x1="1019.51" y1="609.44" x2="1019.51" y2="615.28" stroke="#c08828" stroke-width="1.1" stroke-dasharray="1.2 1"/><line x1="1068.34" y1="609.44" x2="1068.34" y2="615.28" stroke="#c08828" stroke-width="1.1" stroke-dasharray="1.2 1"/><line x1="975.12" y1="584.91" x2="980.96" y2="576.73" stroke="#c08828" stroke-width="1.1" stroke-dasharray="1.2 1"/><line x1="1070.33" y1="588.41" x2="1076.75" y2="579.07" stroke="#c08828" stroke-width="1.1" stroke-dasharray="1.2 1"/><circle cx="983.06" cy="556.29" r="2.3" fill="url(#gO)"/><circle cx="1005.49" cy="557.1" r="2.3" fill="url(#gO)"/><circle cx="1031.78" cy="556.29" r="2.3" fill="url(#gO)"/><circle cx="1053.97" cy="557.1" r="2.3" fill="url(#gO)"/><circle cx="987.97" cy="569.72" r="2.3" fill="url(#gO)"/><circle cx="1000.82" cy="575.56" r="2.3" fill="url(#gO)"/><circle cx="1036.45" cy="570.3" r="2.3" fill="url(#gO)"/><circle cx="1049.88" cy="575.56" r="2.3" fill="url(#gO)"/><circle cx="1018.11" cy="577.08" r="2.3" fill="url(#gO)"/><circle cx="1066.82" cy="577.08" r="2.3" fill="url(#gO)"/><circle cx="985.05" cy="586.66" r="2.3" fill="url(#gO)"/><circle cx="1033.53" cy="586.66" r="2.3" fill="url(#gO)"/><circle cx="1002.34" cy="588.06" r="2.3" fill="url(#gO)"/><circle cx="1051.05" cy="588.06" r="2.3" fill="url(#gO)"/><circle cx="1015.42" cy="593.67" r="2.3" fill="url(#gO)"/><circle cx="1063.9" cy="593.67" r="2.3" fill="url(#gO)"/><circle cx="997.9" cy="606.52" r="2.3" fill="url(#gO)"/><circle cx="1020.09" cy="607.34" r="2.3" fill="url(#gO)"/><circle cx="1046.73" cy="606.52" r="2.3" fill="url(#gO)"/><circle cx="1069.16" cy="607.34" r="2.3" fill="url(#gO)"/><circle cx="983.64" cy="571.82" r="3.3" fill="url(#gV)"/><circle cx="1003.74" cy="570.3" r="3.3" fill="url(#gV)"/><circle cx="1032.36" cy="571.82" r="3.3" fill="url(#gV)"/><circle cx="1052.57" cy="570.3" r="3.3" fill="url(#gV)"/><circle cx="999.65" cy="593.08" r="3.3" fill="url(#gV)"/><circle cx="1019.86" cy="591.68" r="3.3" fill="url(#gV)"/><circle cx="1048.13" cy="593.08" r="3.3" fill="url(#gV)"/><circle cx="1068.57" cy="591.68" r="3.3" fill="url(#gV)"/><path d="M957 540 L960 542 H963" stroke="#888" stroke-width=".6" fill="none"/><rect x="1093" y="623" width="4" height="3" fill="#bbb"/></svg><div class="a" style="left:372px;top:676px;width:779px;height:1px;background:#a0a0a0"></div><div class="a" style="left:372px;top:677px;width:779px;height:123px;background:#f3f3f3"></div><div class="a" style="left:372px;top:678px;width:20px;height:122px;background:#efefef;border:1px solid #a8a8a8;border-left:none"></div><div class="a" style="left:393px;top:678px;width:758px;height:122px;border:1px solid #a8a8a8;border-right:none"></div><svg style="left:376px;top:686px" width="11" height="7" viewBox="0 0 11 7"><rect x="0.5" y="0.5" width="10" height="6" fill="none" stroke="#777"/><path d="M3.8 0.5 V6.5 M7.2 0.5 V6.5 M0.5 3.5 H10.5" stroke="#777"/></svg><svg style="left:377px;top:790px" width="8" height="4" viewBox="0 0 8 4"><path d="M0 0 H8 L4 4 Z" fill="#666"/></svg><div class="a" style="left:392px;top:678px;width:759px;height:1px;background:#d8d8d8"></div><div class="a" style="left:0;top:0;width:1151px;height:856px;overflow:hidden"><div class="a" style="left:400px;top:686px;width:91px;height:79px;background:#a8d6fb;border:1px solid #9a9a9a;box-shadow:inset 0 0 0 1px #fff"></div><div class="a" style="left:407px;top:701px;width:77px;height:48px;background:#000;border:1px solid #888"></div><div class="t" style="left:400px;top:768px;width:91px;text-align:center;font-size:12px;color:#111;letter-spacing:-0.2px">Picture 1</div><div class="a" style="left:501px;top:686px;width:91px;height:79px;background:#a8dcbc;border:1px solid #9a9a9a;box-shadow:inset 0 0 0 1px #fff"></div><div class="a" style="left:508px;top:701px;width:77px;height:48px;background:#000;border:1px solid #888"></div><div class="t" style="left:501px;top:768px;width:91px;text-align:center;font-size:12px;color:#111;letter-spacing:-0.2px">Picture 1</div><div class="a" style="left:602px;top:686px;width:91px;height:79px;background:#f8dc70;border:1px solid #9a9a9a;box-shadow:inset 0 0 0 1px #fff"></div><div class="a" style="left:609px;top:701px;width:77px;height:48px;background:#000;border:1px solid #888"></div><div class="t" style="left:602px;top:768px;width:91px;text-align:center;font-size:12px;color:#111;letter-spacing:-0.2px">Picture 1</div><div class="a" style="left:703px;top:686px;width:91px;height:79px;background:#d6c0f4;border:1px solid #9a9a9a;box-shadow:inset 0 0 0 1px #fff"></div><div class="a" style="left:710px;top:701px;width:77px;height:48px;background:#000;border:1px solid #888"></div><div class="t" style="left:703px;top:768px;width:91px;text-align:center;font-size:12px;color:#111;letter-spacing:-0.2px">Picture 1</div><div class="a" style="left:804px;top:686px;width:91px;height:79px;background:#a8dcbc;border:1px solid #9a9a9a;box-shadow:inset 0 0 0 1px #fff"></div><div class="a" style="left:811px;top:701px;width:77px;height:48px;background:#000;border:1px solid #888"></div><div class="t" style="left:804px;top:768px;width:91px;text-align:center;font-size:12px;color:#111;letter-spacing:-0.2px">Picture 1</div><div class="a" style="left:905px;top:686px;width:91px;height:79px;background:#f8dc70;border:1px solid #9a9a9a;box-shadow:inset 0 0 0 1px #fff"></div><div class="a" style="left:912px;top:701px;width:77px;height:48px;background:#000;border:1px solid #888"></div><div class="t" style="left:905px;top:768px;width:91px;text-align:center;font-size:12px;color:#111;letter-spacing:-0.2px">Picture 1</div><div class="a" style="left:1006px;top:686px;width:91px;height:79px;background:#f8dc70;border:1px solid #9a9a9a;box-shadow:inset 0 0 0 1px #fff"></div><div class="a" style="left:1013px;top:701px;width:77px;height:48px;background:#000;border:1px solid #888"></div><div class="t" style="left:1006px;top:768px;width:91px;text-align:center;font-size:12px;color:#111;letter-spacing:-0.2px">Picture 1</div><div class="a" style="left:1107px;top:686px;width:91px;height:79px;background:#d6c0f4;border:1px solid #9a9a9a;box-shadow:inset 0 0 0 1px #fff"></div><div class="a" style="left:1114px;top:701px;width:77px;height:48px;background:#000;border:1px solid #888"></div><div class="t" style="left:1107px;top:768px;width:91px;text-align:center;font-size:12px;color:#111;letter-spacing:-0.2px">Picture 1</div><svg style="left:0;top:0" width="1679" height="856" viewBox="0 0 1679 856"><g transform="translate(408,702)" stroke="#9a9a9a" stroke-width=".8" fill="none"><path d="M2.2 23.6 L13 14.9 H73 L74.5 22.2 L64 32.7 H5.8 Z M13 14.9 L24 32.5 M2.2 23.6 H74.5 M64 32.7 L55 15"/></g><circle cx="416.0" cy="725" r="1" fill="#d03010"/><circle cx="419.0" cy="725" r=".8" fill="#ddd"/><circle cx="422.2" cy="721" r="1" fill="#d03010"/><circle cx="425.2" cy="725" r=".8" fill="#ddd"/><circle cx="428.4" cy="725" r="1" fill="#d03010"/><circle cx="431.4" cy="725" r=".8" fill="#ddd"/><circle cx="434.6" cy="729" r="1" fill="#d03010"/><circle cx="437.6" cy="725" r=".8" fill="#ddd"/><circle cx="440.8" cy="725" r="1" fill="#d03010"/><circle cx="443.8" cy="725" r=".8" fill="#ddd"/><circle cx="447.0" cy="721" r="1" fill="#d03010"/><circle cx="450.0" cy="725" r=".8" fill="#ddd"/><circle cx="453.2" cy="725" r="1" fill="#d03010"/><circle cx="456.2" cy="725" r=".8" fill="#ddd"/><circle cx="459.4" cy="729" r="1" fill="#d03010"/><circle cx="462.4" cy="725" r=".8" fill="#ddd"/><circle cx="465.6" cy="725" r="1" fill="#d03010"/><circle cx="468.6" cy="725" r=".8" fill="#ddd"/><circle cx="471.8" cy="721" r="1" fill="#d03010"/><circle cx="474.8" cy="725" r=".8" fill="#ddd"/><circle cx="478.0" cy="725" r="1" fill="#d03010"/><circle cx="481.0" cy="725" r=".8" fill="#ddd"/><path d="M410 705 L411 704" stroke="#888" stroke-width=".6"/><rect x="478" y="745" width="4" height="3" fill="#aaa"/><g transform="translate(509,702)" stroke="#9a9a9a" stroke-width=".8" fill="none"><path d="M2.2 23.6 L13 14.9 H73 L74.5 22.2 L64 32.7 H5.8 Z M13 14.9 L24 32.5 M2.2 23.6 H74.5 M64 32.7 L55 15"/></g><circle cx="517.0" cy="725" r="1" fill="#d03010"/><circle cx="520.0" cy="725" r=".8" fill="#ddd"/><circle cx="523.2" cy="721" r="1" fill="#d03010"/><circle cx="526.2" cy="725" r=".8" fill="#ddd"/><circle cx="529.4" cy="725" r="1" fill="#d03010"/><circle cx="532.4" cy="725" r=".8" fill="#ddd"/><circle cx="535.6" cy="729" r="1" fill="#d03010"/><circle cx="538.6" cy="725" r=".8" fill="#ddd"/><circle cx="541.8" cy="725" r="1" fill="#d03010"/><circle cx="544.8" cy="725" r=".8" fill="#ddd"/><circle cx="548.0" cy="721" r="1" fill="#d03010"/><circle cx="551.0" cy="725" r=".8" fill="#ddd"/><circle cx="554.2" cy="725" r="1" fill="#d03010"/><circle cx="557.2" cy="725" r=".8" fill="#ddd"/><circle cx="560.4" cy="729" r="1" fill="#d03010"/><circle cx="563.4" cy="725" r=".8" fill="#ddd"/><circle cx="566.6" cy="725" r="1" fill="#d03010"/><circle cx="569.6" cy="725" r=".8" fill="#ddd"/><circle cx="572.8" cy="721" r="1" fill="#d03010"/><circle cx="575.8" cy="725" r=".8" fill="#ddd"/><circle cx="579.0" cy="725" r="1" fill="#d03010"/><circle cx="582.0" cy="725" r=".8" fill="#ddd"/><path d="M511 705 L512 704" stroke="#888" stroke-width=".6"/><rect x="579" y="745" width="4" height="3" fill="#aaa"/><g transform="translate(610,702)" stroke="#9a9a9a" stroke-width=".8" fill="none"><path d="M17.3 14.9 H48.5 L51.3 40.4 H20 Z M24 7.3 H55.3 L58.5 32.7 H26.7 Z M17.3 14.9 L24 7.3 M48.5 14.9 L55.3 7.3 M51.3 40.4 L58.5 32.7 M20 40.4 L26.7 32.7"/><path d="M22 16 L40 22 L50 18 M25 30 L45 26" stroke="#c08828"/></g><circle cx="627.3" cy="716.9" r="1.4" fill="#e0e0e0"/><circle cx="658.5" cy="716.9" r="1.4" fill="#e0e0e0"/><circle cx="661.3" cy="742.4" r="1.4" fill="#e0e0e0"/><circle cx="630" cy="742.4" r="1.4" fill="#e0e0e0"/><circle cx="634" cy="709.3" r="1.4" fill="#e0e0e0"/><circle cx="665.3" cy="709.3" r="1.4" fill="#e0e0e0"/><circle cx="668.5" cy="734.7" r="1.4" fill="#e0e0e0"/><circle cx="636.7" cy="734.7" r="1.4" fill="#e0e0e0"/><circle cx="647" cy="720" r="1.4" fill="#e0e0e0"/><circle cx="640" cy="729" r="1.4" fill="#e0e0e0"/><circle cx="655" cy="730" r="1.4" fill="#e0e0e0"/><circle cx="636" cy="718" r="1.1" fill="#d02010"/><circle cx="645" cy="724" r="1.1" fill="#d02010"/><circle cx="652" cy="722" r="1.1" fill="#d02010"/><circle cx="641" cy="735" r="1.1" fill="#d02010"/><circle cx="650" cy="733" r="1.1" fill="#d02010"/><circle cx="657" cy="724" r="1.1" fill="#d02010"/><circle cx="638" cy="726" r="1.1" fill="#d02010"/><circle cx="662" cy="728" r="1.1" fill="#d02010"/><path d="M612 705 L613 704" stroke="#888" stroke-width=".6"/><rect x="680" y="745" width="4" height="3" fill="#aaa"/><g transform="translate(711,702)" stroke="#9a9a9a" stroke-width=".8" fill="none"><path d="M17.3 14.9 H48.5 L51.3 40.4 H20 Z M24 7.3 H55.3 L58.5 32.7 H26.7 Z M17.3 14.9 L24 7.3 M48.5 14.9 L55.3 7.3 M51.3 40.4 L58.5 32.7 M20 40.4 L26.7 32.7"/><path d="M22 16 L40 22 L50 18 M25 30 L45 26" stroke="#c08828"/></g><circle cx="728.3" cy="716.9" r="1.4" fill="#e0e0e0"/><circle cx="759.5" cy="716.9" r="1.4" fill="#e0e0e0"/><circle cx="762.3" cy="742.4" r="1.4" fill="#e0e0e0"/><circle cx="731" cy="742.4" r="1.4" fill="#e0e0e0"/><circle cx="735" cy="709.3" r="1.4" fill="#e0e0e0"/><circle cx="766.3" cy="709.3" r="1.4" fill="#e0e0e0"/><circle cx="769.5" cy="734.7" r="1.4" fill="#e0e0e0"/><circle cx="737.7" cy="734.7" r="1.4" fill="#e0e0e0"/><circle cx="748" cy="720" r="1.4" fill="#e0e0e0"/><circle cx="741" cy="729" r="1.4" fill="#e0e0e0"/><circle cx="756" cy="730" r="1.4" fill="#e0e0e0"/><circle cx="737" cy="718" r="1.1" fill="#d02010"/><circle cx="746" cy="724" r="1.1" fill="#d02010"/><circle cx="753" cy="722" r="1.1" fill="#d02010"/><circle cx="742" cy="735" r="1.1" fill="#d02010"/><circle cx="751" cy="733" r="1.1" fill="#d02010"/><circle cx="758" cy="724" r="1.1" fill="#d02010"/><circle cx="739" cy="726" r="1.1" fill="#d02010"/><circle cx="763" cy="728" r="1.1" fill="#d02010"/><path d="M713 705 L714 704" stroke="#888" stroke-width=".6"/><rect x="781" y="745" width="4" height="3" fill="#aaa"/><g transform="translate(812,702)" stroke="#9a9a9a" stroke-width=".7" fill="none"><path d="M6 2 H67 L70 36 H12 Z M3 11 H64 L66 45 H9 Z M6 2 L3 11 M67 2 L64 11 M70 36 L66 45 M12 36 L9 45"/></g><g transform="translate(812,702)" stroke="#b07a20" stroke-width=".7" fill="none"><path d="M13 16 L26 21 L20 27 L14 33 M19 11 L26 21 M34 31 L28 37 M42 16 L55 20 L49 27 L44 33 M48 11 L55 20 M62 31 L56 37 M33 15 L42 16 M20 27 L34 31 L49 27 L62 31"/></g><circle cx="820" cy="711" r="1.4" fill="#e01010"/><circle cx="828" cy="709" r="1.4" fill="#e01010"/><circle cx="843" cy="707" r="1.4" fill="#e01010"/><circle cx="857" cy="709" r="1.4" fill="#e01010"/><circle cx="870" cy="710" r="1.4" fill="#e01010"/><circle cx="834" cy="716" r="1.4" fill="#e01010"/><circle cx="849" cy="714" r="1.4" fill="#e01010"/><circle cx="864" cy="715" r="1.4" fill="#e01010"/><circle cx="821" cy="725" r="1.4" fill="#e01010"/><circle cx="842" cy="725" r="1.4" fill="#e01010"/><circle cx="850" cy="727" r="1.4" fill="#e01010"/><circle cx="870" cy="726" r="1.4" fill="#e01010"/><circle cx="879" cy="724" r="1.4" fill="#e01010"/><circle cx="830" cy="733" r="1.4" fill="#e01010"/><circle cx="836" cy="732" r="1.4" fill="#e01010"/><circle cx="850" cy="737" r="1.4" fill="#e01010"/><circle cx="864" cy="737" r="1.4" fill="#e01010"/><circle cx="818" cy="740" r="1.4" fill="#e01010"/><circle cx="844" cy="744" r="1.4" fill="#e01010"/><circle cx="858" cy="744" r="1.4" fill="#e01010"/><circle cx="877" cy="740" r="1.4" fill="#e01010"/><circle cx="824" cy="729" r="1.4" fill="#e01010"/><circle cx="853" cy="721" r="1.4" fill="#e01010"/><circle cx="831" cy="713" r="2" fill="url(#gV)"/><circle cx="825" cy="718" r="2" fill="url(#gV)"/><circle cx="838" cy="723" r="2" fill="url(#gV)"/><circle cx="832" cy="729" r="2" fill="url(#gV)"/><circle cx="826" cy="735" r="2" fill="url(#gV)"/><circle cx="846" cy="733" r="2" fill="url(#gV)"/><circle cx="840" cy="739" r="2" fill="url(#gV)"/><circle cx="860" cy="713" r="2" fill="url(#gV)"/><circle cx="854" cy="718" r="2" fill="url(#gV)"/><circle cx="867" cy="722" r="2" fill="url(#gV)"/><circle cx="861" cy="729" r="2" fill="url(#gV)"/><circle cx="856" cy="735" r="2" fill="url(#gV)"/><circle cx="874" cy="733" r="2" fill="url(#gV)"/><circle cx="868" cy="739" r="2" fill="url(#gV)"/><circle cx="874" cy="717" r="2" fill="url(#gV)"/><circle cx="845" cy="717" r="2" fill="url(#gV)"/><path d="M814 705 L815 704" stroke="#888" stroke-width=".6"/><rect x="882" y="745" width="4" height="3" fill="#aaa"/><g transform="translate(913,702)" stroke="#9a9a9a" stroke-width=".7" fill="none"><path d="M6 2 H67 L70 36 H12 Z M3 11 H64 L66 45 H9 Z M6 2 L3 11 M67 2 L64 11 M70 36 L66 45 M12 36 L9 45"/></g><g transform="translate(913,702)" stroke="#b07a20" stroke-width=".7" fill="none"><path d="M13 16 L26 21 L20 27 L14 33 M19 11 L26 21 M34 31 L28 37 M42 16 L55 20 L49 27 L44 33 M48 11 L55 20 M62 31 L56 37 M33 15 L42 16 M20 27 L34 31 L49 27 L62 31"/></g><circle cx="921" cy="711" r="1.4" fill="#e01010"/><circle cx="929" cy="709" r="1.4" fill="#e01010"/><circle cx="944" cy="707" r="1.4" fill="#e01010"/><circle cx="958" cy="709" r="1.4" fill="#e01010"/><circle cx="971" cy="710" r="1.4" fill="#e01010"/><circle cx="935" cy="716" r="1.4" fill="#e01010"/><circle cx="950" cy="714" r="1.4" fill="#e01010"/><circle cx="965" cy="715" r="1.4" fill="#e01010"/><circle cx="922" cy="725" r="1.4" fill="#e01010"/><circle cx="943" cy="725" r="1.4" fill="#e01010"/><circle cx="951" cy="727" r="1.4" fill="#e01010"/><circle cx="971" cy="726" r="1.4" fill="#e01010"/><circle cx="980" cy="724" r="1.4" fill="#e01010"/><circle cx="931" cy="733" r="1.4" fill="#e01010"/><circle cx="937" cy="732" r="1.4" fill="#e01010"/><circle cx="951" cy="737" r="1.4" fill="#e01010"/><circle cx="965" cy="737" r="1.4" fill="#e01010"/><circle cx="919" cy="740" r="1.4" fill="#e01010"/><circle cx="945" cy="744" r="1.4" fill="#e01010"/><circle cx="959" cy="744" r="1.4" fill="#e01010"/><circle cx="978" cy="740" r="1.4" fill="#e01010"/><circle cx="925" cy="729" r="1.4" fill="#e01010"/><circle cx="954" cy="721" r="1.4" fill="#e01010"/><circle cx="932" cy="713" r="2" fill="url(#gV)"/><circle cx="926" cy="718" r="2" fill="url(#gV)"/><circle cx="939" cy="723" r="2" fill="url(#gV)"/><circle cx="933" cy="729" r="2" fill="url(#gV)"/><circle cx="927" cy="735" r="2" fill="url(#gV)"/><circle cx="947" cy="733" r="2" fill="url(#gV)"/><circle cx="941" cy="739" r="2" fill="url(#gV)"/><circle cx="961" cy="713" r="2" fill="url(#gV)"/><circle cx="955" cy="718" r="2" fill="url(#gV)"/><circle cx="968" cy="722" r="2" fill="url(#gV)"/><circle cx="962" cy="729" r="2" fill="url(#gV)"/><circle cx="957" cy="735" r="2" fill="url(#gV)"/><circle cx="975" cy="733" r="2" fill="url(#gV)"/><circle cx="969" cy="739" r="2" fill="url(#gV)"/><circle cx="975" cy="717" r="2" fill="url(#gV)"/><circle cx="946" cy="717" r="2" fill="url(#gV)"/><path d="M915 705 L916 704" stroke="#888" stroke-width=".6"/><rect x="983" y="745" width="4" height="3" fill="#aaa"/><g transform="translate(1014,702)" stroke="#9a9a9a" stroke-width=".7" fill="none"><path d="M6 2 H67 L70 36 H12 Z M3 11 H64 L66 45 H9 Z M6 2 L3 11 M67 2 L64 11 M70 36 L66 45 M12 36 L9 45"/></g><g transform="translate(1014,702)" stroke="#b07a20" stroke-width=".7" fill="none"><path d="M13 16 L26 21 L20 27 L14 33 M19 11 L26 21 M34 31 L28 37 M42 16 L55 20 L49 27 L44 33 M48 11 L55 20 M62 31 L56 37 M33 15 L42 16 M20 27 L34 31 L49 27 L62 31"/></g><circle cx="1022" cy="711" r="1.4" fill="#e01010"/><circle cx="1030" cy="709" r="1.4" fill="#e01010"/><circle cx="1045" cy="707" r="1.4" fill="#e01010"/><circle cx="1059" cy="709" r="1.4" fill="#e01010"/><circle cx="1072" cy="710" r="1.4" fill="#e01010"/><circle cx="1036" cy="716" r="1.4" fill="#e01010"/><circle cx="1051" cy="714" r="1.4" fill="#e01010"/><circle cx="1066" cy="715" r="1.4" fill="#e01010"/><circle cx="1023" cy="725" r="1.4" fill="#e01010"/><circle cx="1044" cy="725" r="1.4" fill="#e01010"/><circle cx="1052" cy="727" r="1.4" fill="#e01010"/><circle cx="1072" cy="726" r="1.4" fill="#e01010"/><circle cx="1081" cy="724" r="1.4" fill="#e01010"/><circle cx="1032" cy="733" r="1.4" fill="#e01010"/><circle cx="1038" cy="732" r="1.4" fill="#e01010"/><circle cx="1052" cy="737" r="1.4" fill="#e01010"/><circle cx="1066" cy="737" r="1.4" fill="#e01010"/><circle cx="1020" cy="740" r="1.4" fill="#e01010"/><circle cx="1046" cy="744" r="1.4" fill="#e01010"/><circle cx="1060" cy="744" r="1.4" fill="#e01010"/><circle cx="1079" cy="740" r="1.4" fill="#e01010"/><circle cx="1026" cy="729" r="1.4" fill="#e01010"/><circle cx="1055" cy="721" r="1.4" fill="#e01010"/><circle cx="1033" cy="713" r="2" fill="url(#gV)"/><circle cx="1027" cy="718" r="2" fill="url(#gV)"/><circle cx="1040" cy="723" r="2" fill="url(#gV)"/><circle cx="1034" cy="729" r="2" fill="url(#gV)"/><circle cx="1028" cy="735" r="2" fill="url(#gV)"/><circle cx="1048" cy="733" r="2" fill="url(#gV)"/><circle cx="1042" cy="739" r="2" fill="url(#gV)"/><circle cx="1062" cy="713" r="2" fill="url(#gV)"/><circle cx="1056" cy="718" r="2" fill="url(#gV)"/><circle cx="1069" cy="722" r="2" fill="url(#gV)"/><circle cx="1063" cy="729" r="2" fill="url(#gV)"/><circle cx="1058" cy="735" r="2" fill="url(#gV)"/><circle cx="1076" cy="733" r="2" fill="url(#gV)"/><circle cx="1070" cy="739" r="2" fill="url(#gV)"/><circle cx="1076" cy="717" r="2" fill="url(#gV)"/><circle cx="1047" cy="717" r="2" fill="url(#gV)"/><path d="M1016 705 L1017 704" stroke="#888" stroke-width=".6"/><rect x="1084" y="745" width="4" height="3" fill="#aaa"/><g transform="translate(1115,702)" stroke="#9a9a9a" stroke-width=".7" fill="none"><path d="M6 2 H67 L70 36 H12 Z M3 11 H64 L66 45 H9 Z M6 2 L3 11 M67 2 L64 11 M70 36 L66 45 M12 36 L9 45"/></g><g transform="translate(1115,702)" stroke="#b07a20" stroke-width=".7" fill="none"><path d="M13 16 L26 21 L20 27 L14 33 M19 11 L26 21 M34 31 L28 37 M42 16 L55 20 L49 27 L44 33 M48 11 L55 20 M62 31 L56 37 M33 15 L42 16 M20 27 L34 31 L49 27 L62 31"/></g><circle cx="1123" cy="711" r="1.4" fill="#e01010"/><circle cx="1131" cy="709" r="1.4" fill="#e01010"/><circle cx="1146" cy="707" r="1.4" fill="#e01010"/><circle cx="1160" cy="709" r="1.4" fill="#e01010"/><circle cx="1173" cy="710" r="1.4" fill="#e01010"/><circle cx="1137" cy="716" r="1.4" fill="#e01010"/><circle cx="1152" cy="714" r="1.4" fill="#e01010"/><circle cx="1167" cy="715" r="1.4" fill="#e01010"/><circle cx="1124" cy="725" r="1.4" fill="#e01010"/><circle cx="1145" cy="725" r="1.4" fill="#e01010"/><circle cx="1153" cy="727" r="1.4" fill="#e01010"/><circle cx="1173" cy="726" r="1.4" fill="#e01010"/><circle cx="1182" cy="724" r="1.4" fill="#e01010"/><circle cx="1133" cy="733" r="1.4" fill="#e01010"/><circle cx="1139" cy="732" r="1.4" fill="#e01010"/><circle cx="1153" cy="737" r="1.4" fill="#e01010"/><circle cx="1167" cy="737" r="1.4" fill="#e01010"/><circle cx="1121" cy="740" r="1.4" fill="#e01010"/><circle cx="1147" cy="744" r="1.4" fill="#e01010"/><circle cx="1161" cy="744" r="1.4" fill="#e01010"/><circle cx="1180" cy="740" r="1.4" fill="#e01010"/><circle cx="1127" cy="729" r="1.4" fill="#e01010"/><circle cx="1156" cy="721" r="1.4" fill="#e01010"/><circle cx="1134" cy="713" r="2" fill="url(#gV)"/><circle cx="1128" cy="718" r="2" fill="url(#gV)"/><circle cx="1141" cy="723" r="2" fill="url(#gV)"/><circle cx="1135" cy="729" r="2" fill="url(#gV)"/><circle cx="1129" cy="735" r="2" fill="url(#gV)"/><circle cx="1149" cy="733" r="2" fill="url(#gV)"/><circle cx="1143" cy="739" r="2" fill="url(#gV)"/><circle cx="1163" cy="713" r="2" fill="url(#gV)"/><circle cx="1157" cy="718" r="2" fill="url(#gV)"/><circle cx="1170" cy="722" r="2" fill="url(#gV)"/><circle cx="1164" cy="729" r="2" fill="url(#gV)"/><circle cx="1159" cy="735" r="2" fill="url(#gV)"/><circle cx="1177" cy="733" r="2" fill="url(#gV)"/><circle cx="1171" cy="739" r="2" fill="url(#gV)"/><circle cx="1177" cy="717" r="2" fill="url(#gV)"/><circle cx="1148" cy="717" r="2" fill="url(#gV)"/><path d="M1117 705 L1118 704" stroke="#888" stroke-width=".6"/><rect x="1185" y="745" width="4" height="3" fill="#aaa"/></svg></div><div class="a" style="left:392px;top:784px;width:759px;height:16px;background:linear-gradient(#e8e8e8,#f4f4f4)"></div><svg style="left:398px;top:788px" width="4" height="8" viewBox="0 0 4 8"><path d="M4 0 V8 L0 4 Z" fill="#404040"/></svg><svg style="left:1139px;top:788px" width="4" height="8" viewBox="0 0 4 8"><path d="M0 0 V8 L4 4 Z" fill="#404040"/></svg><div class="a" style="left:412px;top:785px;width:336px;height:14px;background:linear-gradient(#f4f4f4,#dadada);border:1px solid #a8a8a8;border-radius:2px"></div><svg style="left:576px;top:788px" width="5" height="7" viewBox="0 0 5 7"><path d="M0.5 0 V7 M2.5 0 V7 M4.5 0 V7" stroke="#555"/></svg>
<div class="a" style="left:1152px;top:272px;width:520px;height:530px;background:#f0f0f0"></div><div class="a" style="left:1156px;top:277px;width:514px;height:270px;background:#fff;border:1px solid #a0a0a0;border-bottom:none"></div><div class="a" style="left:1157px;top:278px;width:512px;height:23px;background:#f0f0f0;border-bottom:1px solid #a0a0a0"></div><div class="t" style="left:1164px;top:283px;font-size:12px;color:#111;letter-spacing:-0.1px">Data sheet</div><svg style="left:1225px;top:291px" width="5" height="3" viewBox="0 0 5 3"><path d="M0 0 H5 L2.5 3 Z" fill="#999"/></svg><svg style="left:1654px;top:285px" width="10" height="9" viewBox="0 0 10 9"><path d="M1 1 L9 8 M9 1 L1 8" stroke="#7a7a7a" stroke-width="2"/></svg><div class="a" style="left:1653px;top:302px;width:17px;height:246px;background:linear-gradient(90deg,#e8e8e8,#f4f4f4)"></div><svg style="left:1658px;top:308px" width="7" height="4" viewBox="0 0 7 4"><path d="M0 4 H7 L3.5 0 Z" fill="#404040"/></svg><svg style="left:1658px;top:538px" width="7" height="4" viewBox="0 0 7 4"><path d="M0 0 H7 L3.5 4 Z" fill="#404040"/></svg><div class="a" style="left:1654px;top:320px;width:15px;height:124px;background:linear-gradient(90deg,#f4f4f4,#dadada);border:1px solid #a8a8a8;border-radius:2px"></div><svg style="left:1657px;top:380px" width="8" height="5" viewBox="0 0 8 5"><path d="M0 0.5 H8 M0 2.5 H8 M0 4.5 H8" stroke="#555"/></svg><div class="a" style="left:1168px;top:318px;width:386px;height:15px;background:#a6d4fa"></div><div class="t" style="left:1172px;top:318px;width:386px;text-align:center;font-size:11.7px;font-weight:bold;color:#111;line-height:15px">General</div><div class="a" style="left:1168px;top:339px;width:92px;height:15px;background:#a6d4fa"></div><div class="t" style="left:1171px;top:339px;font-size:11.7px;font-weight:bold;color:#111;line-height:15px">Origin</div><div class="t" style="left:1267px;top:339px;font-size:11.8px;color:#111;line-height:15px">455496</div><div class="a" style="left:1168px;top:355px;width:92px;height:15px;background:#a6d4fa"></div><div class="t" style="left:1171px;top:355px;font-size:11.7px;font-weight:bold;color:#111;line-height:15px">Formula</div><div class="t" style="left:1267px;top:355px;font-size:11.8px;color:#111;line-height:15px">VO2(B)</div><div class="a" style="left:1168px;top:387px;width:386px;height:15px;background:#a6d4fa"></div><div class="t" style="left:1172px;top:387px;width:386px;text-align:center;font-size:11.7px;font-weight:bold;color:#111;line-height:15px">Bibliographic data</div><div class="a" style="left:1168px;top:408px;width:92px;height:15px;background:#a6d4fa"></div><div class="t" style="left:1171px;top:408px;font-size:11.7px;font-weight:bold;color:#111;line-height:15px">Author(s)</div><div class="t" style="left:1267px;top:408px;font-size:11.8px;color:#111;line-height:15px">Oka Y., Yao T., Yamamoto N., Ueda Y., Hayashi A.</div><div class="a" style="left:1168px;top:424px;width:92px;height:15px;background:#a6d4fa"></div><div class="t" style="left:1171px;top:424px;font-size:11.7px;font-weight:bold;color:#111;line-height:15px">Publication title</div><div class="t" style="left:1267px;top:424px;font-size:11.8px;color:#111;line-height:15px">Phase Transition and V4+-V4+ Pairing in VO2(B)</div><div class="a" style="left:1168px;top:440px;width:92px;height:15px;background:#a6d4fa"></div><div class="t" style="left:1171px;top:440px;font-size:11.7px;font-weight:bold;color:#111;line-height:15px">Citation</div><div class="t" style="left:1267px;top:440px;font-size:11.8px;color:#111;line-height:15px">Journal of Solid State Chemistry, 105, 271-278 (1993)</div><div class="a" style="left:1168px;top:472px;width:386px;height:15px;background:#a6d4fa"></div><div class="t" style="left:1172px;top:472px;width:386px;text-align:center;font-size:11.7px;font-weight:bold;color:#111;line-height:15px">Phase data</div><div class="a" style="left:1168px;top:493px;width:92px;height:15px;background:#a6d4fa"></div><div class="t" style="left:1171px;top:493px;font-size:11.7px;font-weight:bold;color:#111;line-height:15px">Space-group</div><div class="t" style="left:1267px;top:493px;font-size:11.8px;color:#111;line-height:15px">C 1 2/m 1 (12) - monoclinic</div><div class="a" style="left:1168px;top:509px;width:92px;height:32px;background:#a6d4fa"></div><div class="t" style="left:1171px;top:517px;font-size:11.7px;font-weight:bold;color:#111;line-height:15px">Cell</div><div class="t" style="left:1267px;top:509px;font-size:11.6px;color:#111;line-height:15px;letter-spacing:-0.2px">a=12.152(2) Å b=3.7199(5) Å c=6.347(1) Å β=107.58(3)°</div><div class="t" style="left:1267px;top:526px;font-size:11.6px;color:#111;line-height:15px;letter-spacing:-0.2px">V=273.51(9) Å<sup style="font-size:8px;vertical-align:5px;line-height:0">3</sup></div><div class="a" style="left:1156px;top:551px;width:514px;height:250px;background:#f0f0f0;border:1px solid #a0a0a0;border-bottom:none"></div><div class="a" style="left:1157px;top:570px;width:512px;height:1px;background:#a0a0a0"></div><div class="t" style="left:1163px;top:555px;font-size:12px;color:#111;letter-spacing:-0.1px">Properties</div><svg style="left:1654px;top:556px" width="10" height="9" viewBox="0 0 10 9"><path d="M1 1 L9 8 M9 1 L1 8" stroke="#7a7a7a" stroke-width="2"/></svg><div class="a" style="left:1159px;top:573px;width:509px;height:22px;background:#fff;border:1px solid #e0e0e0"></div><div class="t" style="left:1163px;top:576px;font-size:11.5px;color:#111;">Object info</div><svg style="left:1655px;top:582px" width="8" height="4" viewBox="0 0 8 4"><path d="M0 0 H8 L4 4 Z" fill="#111"/></svg><div class="a" style="left:1157px;top:596px;width:497px;height:21px;background:linear-gradient(#fbfbfb 0,#fbfbfb 9px,#f0f0f0 9px,#ececec);border-bottom:1px solid #d8d8d8"></div><div class="a" style="left:1354px;top:597px;width:1px;height:19px;background:#d8d8d8"></div><div class="a" style="left:1157px;top:617px;width:497px;height:184px;background:#fff;overflow:hidden"><div class="a" style="left:0;top:19px;width:497px;height:1px;background:#ebebeb"></div><div class="t" style="left:6px;top:4px;font-size:12px;color:#111;letter-spacing:-0.15px">Atom number</div><div class="t" style="left:204px;top:4px;font-size:11.2px;color:#111;letter-spacing:-0.3px">#5</div><div class="a" style="left:0;top:38px;width:497px;height:1px;background:#ebebeb"></div><div class="t" style="left:6px;top:23px;font-size:12px;color:#111;letter-spacing:-0.15px">Atom (site) symbol</div><div class="t" style="left:204px;top:23px;font-size:11.2px;color:#111;letter-spacing:-0.3px">V(1)</div><div class="a" style="left:0;top:57px;width:497px;height:1px;background:#ebebeb"></div><div class="t" style="left:6px;top:42px;font-size:12px;color:#111;letter-spacing:-0.15px">Chemical composition</div><div class="t" style="left:204px;top:42px;font-size:11.2px;color:#111;letter-spacing:-0.3px">V (+0)</div><div class="a" style="left:0;top:76px;width:497px;height:1px;background:#ebebeb"></div><div class="t" style="left:6px;top:61px;font-size:12px;color:#111;letter-spacing:-0.15px">Atom group</div><div class="t" style="left:204px;top:61px;font-size:11.2px;color:#111;letter-spacing:-0.3px">V+0</div><div class="a" style="left:0;top:95px;width:497px;height:1px;background:#ebebeb"></div><div class="t" style="left:6px;top:80px;font-size:12px;color:#111;letter-spacing:-0.15px">Original coordinates</div><div class="t" style="left:204px;top:80px;font-size:11.2px;color:#111;letter-spacing:-0.3px">0.2964(3), 0, 0.7249(7)</div><div class="a" style="left:0;top:114px;width:497px;height:1px;background:#ebebeb"></div><div class="t" style="left:6px;top:99px;font-size:12px;color:#111;letter-spacing:-0.15px">Symm. op. (atom code)</div><div class="t" style="left:204px;top:99px;font-size:11.2px;color:#111;letter-spacing:-0.3px">x, y, z (1555011)</div><div class="a" style="left:0;top:133px;width:497px;height:1px;background:#ebebeb"></div><div class="t" style="left:6px;top:118px;font-size:12px;color:#111;letter-spacing:-0.15px">Crystal coordinates</div><div class="t" style="left:204px;top:118px;font-size:11.2px;color:#111;letter-spacing:-0.3px">0.2964(3), 0, 0.7249(7)</div><div class="a" style="left:0;top:152px;width:497px;height:1px;background:#ebebeb"></div><div class="t" style="left:6px;top:137px;font-size:12px;color:#111;letter-spacing:-0.15px">Orthogonal coordinates</div><div class="t" style="left:204px;top:137px;font-size:11.2px;color:#111;letter-spacing:-0.3px">2.2122(39), 0, 4.3861(42)</div><div class="a" style="left:0;top:171px;width:497px;height:1px;background:#ebebeb"></div><div class="t" style="left:6px;top:156px;font-size:12px;color:#111;letter-spacing:-0.15px">View coordinates</div><div class="t" style="left:204px;top:156px;font-size:11.2px;color:#111;letter-spacing:-0.3px">2.2122(39), 3.2207(42), 4.8852(0)</div><div class="a" style="left:0;top:190px;width:497px;height:1px;background:#ebebeb"></div><div class="t" style="left:6px;top:175px;font-size:12px;color:#111;letter-spacing:-0.15px">Number of bonds</div><div class="t" style="left:204px;top:175px;font-size:11.2px;color:#111;letter-spacing:-0.3px">4</div><div class="a" style="left:197px;top:0;width:1px;height:185px;background:#e4e4e4"></div></div><div class="a" style="left:1653px;top:596px;width:17px;height:205px;background:linear-gradient(90deg,#e8e8e8,#f4f4f4)"></div><svg style="left:1658px;top:602px" width="7" height="4" viewBox="0 0 7 4"><path d="M0 4 H7 L3.5 0 Z" fill="#404040"/></svg><svg style="left:1658px;top:791px" width="7" height="4" viewBox="0 0 7 4"><path d="M0 0 H7 L3.5 4 Z" fill="#404040"/></svg><div class="a" style="left:1654px;top:616px;width:15px;height:150px;background:linear-gradient(90deg,#f4f4f4,#dadada);border:1px solid #a8a8a8;border-radius:2px"></div><svg style="left:1657px;top:689px" width="8" height="5" viewBox="0 0 8 5"><path d="M0 0.5 H8 M0 2.5 H8 M0 4.5 H8" stroke="#555"/></svg>
<div class="a" style="left:7px;top:802px;width:1665px;height:26px;background:#9eabc3"></div><div class="a" style="left:10px;top:803px;width:694px;height:24px;background:linear-gradient(#d3dae5,#c6cedc);border-radius:3px;border-bottom:1px solid #a4afc2"></div><div class="a" style="left:693px;top:803px;width:11px;height:24px;background:#d9dfe8;border-radius:0 3px 3px 0"></div><div class="a" style="left:695px;top:816px;width:7px;height:1px;background:#1c2a40"></div><svg style="left:695px;top:819px" width="7" height="4" viewBox="0 0 7 4"><path d="M0 0 H7 L3.5 4 Z" fill="#1c2a40"/></svg><div class="a" style="left:14px;top:807px;width:2px;height:2px;background:#46536a"></div><div class="a" style="left:14px;top:811px;width:2px;height:2px;background:#46536a"></div><div class="a" style="left:14px;top:815px;width:2px;height:2px;background:#46536a"></div><div class="a" style="left:14px;top:819px;width:2px;height:2px;background:#46536a"></div><div class="a" style="left:707px;top:803px;width:241px;height:24px;background:linear-gradient(#d3dae5,#c6cedc);border-radius:3px;border-bottom:1px solid #a4afc2"></div><div class="a" style="left:937px;top:803px;width:11px;height:24px;background:#d9dfe8;border-radius:0 3px 3px 0"></div><div class="a" style="left:939px;top:816px;width:7px;height:1px;background:#1c2a40"></div><svg style="left:939px;top:819px" width="7" height="4" viewBox="0 0 7 4"><path d="M0 0 H7 L3.5 4 Z" fill="#1c2a40"/></svg><div class="a" style="left:711px;top:807px;width:2px;height:2px;background:#46536a"></div><div class="a" style="left:711px;top:811px;width:2px;height:2px;background:#46536a"></div><div class="a" style="left:711px;top:815px;width:2px;height:2px;background:#46536a"></div><div class="a" style="left:711px;top:819px;width:2px;height:2px;background:#46536a"></div><div class="a" style="left:950px;top:803px;width:109px;height:24px;background:linear-gradient(#d3dae5,#c6cedc);border-radius:3px;border-bottom:1px solid #a4afc2"></div><div class="a" style="left:1048px;top:803px;width:11px;height:24px;background:#d9dfe8;border-radius:0 3px 3px 0"></div><div class="a" style="left:1050px;top:816px;width:7px;height:1px;background:#1c2a40"></div><svg style="left:1050px;top:819px" width="7" height="4" viewBox="0 0 7 4"><path d="M0 0 H7 L3.5 4 Z" fill="#1c2a40"/></svg><div class="a" style="left:954px;top:807px;width:2px;height:2px;background:#46536a"></div><div class="a" style="left:954px;top:811px;width:2px;height:2px;background:#46536a"></div><div class="a" style="left:954px;top:815px;width:2px;height:2px;background:#46536a"></div><div class="a" style="left:954px;top:819px;width:2px;height:2px;background:#46536a"></div><svg style="left:21px;top:808px" width="16" height="16" viewBox="0 0 16 16"><rect x="0.5" y="0.5" width="15" height="14" fill="#f8f4e0" stroke="#6a84b8"/><rect x="1" y="1" width="14" height="2.5" fill="#7aa0e0"/><path d="M4.5 8 A3.5 3.5 0 0 1 11 6.5 M11.5 9 A3.5 3.5 0 0 1 5 10.5" stroke="#e8b020" stroke-width="2" fill="none"/><path d="M10 4.5 L12.5 7 L9.5 7.5 Z M6 12.5 L3.5 10 L6.5 9.5 Z" fill="#e8b020"/></svg><svg style="left:43px;top:808px" width="16" height="16" viewBox="0 0 16 16"><rect x="0.5" y="0.5" width="13" height="11" fill="#fff" stroke="#000"/><rect x="1" y="1" width="12" height="2" fill="#10208a"/><path d="M2.5 5.5 H8.5 M2.5 7.5 H8.5 M2.5 9.5 H6.5" stroke="#666"/><path d="M7.5 10.5 H11.5 V8.5 L15.5 12 L11.5 15.5 V13.5 H7.5 Z" fill="#40e0f0" stroke="#10306a"/></svg><svg style="left:65px;top:808px" width="16" height="16" viewBox="0 0 16 16"><path d="M6 5 L14.5 14" stroke="#000" stroke-width="2"/><path d="M5.5 3.5 L7.5 1.5 L9 3 L7 5 Z" fill="#f0e040" stroke="#555" stroke-width=".5"/><path d="M11 1 L12 3 L14 3.5 L12 4 L11 6 L10.5 4 L9 3.5 L10.5 3 Z" fill="#111"/><circle cx="2.5" cy="8.5" r="2" fill="#f8f020" stroke="#333" stroke-width=".6"/><circle cx="6" cy="9.5" r="2" fill="#9a9a30" stroke="#333" stroke-width=".6"/><circle cx="2.5" cy="12.5" r="2" fill="#f8f020" stroke="#333" stroke-width=".6"/><circle cx="5" cy="14" r="1.6" fill="#f8f020"/><path d="M1 1 H2" stroke="#111"/></svg><svg style="left:87px;top:808px" width="16" height="16" viewBox="0 0 16 16"><rect x="0.5" y="0.5" width="14" height="13" fill="#fff" stroke="#000"/><rect x="1" y="1" width="13" height="2" fill="#10208a"/><path d="M6 6 L9 4.5 L13 8 L11.5 10 Z" fill="#f0e040" stroke="#000" stroke-width=".8"/><path d="M8.5 7.5 L1 15" stroke="#6a2010" stroke-width="1.8"/></svg><svg style="left:106px;top:815px" width="7" height="4" viewBox="0 0 7 4"><path d="M0 0 H7 L3.5 4 Z" fill="#1c2a40"/></svg><div class="a" style="left:120px;top:807px;width:1px;height:17px;background:#8d99ad;box-shadow:1px 0 0 #eef1f6"></div><svg style="left:128px;top:808px" width="16" height="16" viewBox="0 0 16 16"><path d="M1.5 8.5 L7 3 Q8 2 9 3 L14.5 8.5 L9 14 Q8 15 7 14 Z" fill="#e0e070" stroke="#000" stroke-width="1.1"/><path d="M7 3 L11.5 7.5 L8 11 L3.5 6.5 Z" fill="#9a9a9a"/><path d="M1 9 L1 12" stroke="#000" stroke-width="1.5"/></svg><svg style="left:148px;top:808px" width="16" height="16" viewBox="0 0 16 16"><circle cx="11" cy="4.3" r="3.5" fill="#ffee00" stroke="#000"/><circle cx="4.8" cy="11.5" r="3.5" fill="#ffee00" stroke="#000"/><circle cx="11" cy="11.5" r="3.5" fill="#ffee00" stroke="#000"/><path d="M1 4 H7 M4 1 V7" stroke="#000" stroke-width="1.6"/></svg><svg style="left:170px;top:808px" width="16" height="16" viewBox="0 0 16 16"><path d="M1 8 H7 M4 5 V11" stroke="#111" stroke-width="2"/><circle cx="11.5" cy="8" r="3.8" fill="#ffee00" stroke="#111"/></svg><svg style="left:192px;top:808px" width="16" height="16" viewBox="0 0 16 16"><path d="M5 4 Q5 1 8 1 Q11 1 11 4 Q11 6 8 7 V9" stroke="#111" stroke-width="1.5" fill="none"/><circle cx="3" cy="13" r="2.5" fill="#fff" stroke="#111"/><circle cx="13" cy="13" r="2.5" fill="#fff" stroke="#111"/><circle cx="8" cy="11.5" r="1" fill="#111"/></svg><svg style="left:214px;top:808px" width="16" height="16" viewBox="0 0 16 16"><rect x="3" y="3" width="10" height="10" fill="none" stroke="#1a2ab0" stroke-width="1.2"/><path d="M3 3 L13 13 M13 3 L3 13" stroke="#1a2ab0"/><circle cx="3" cy="3" r="2" fill="#fff" stroke="#111"/><circle cx="13" cy="3" r="2" fill="#fff" stroke="#111"/><circle cx="3" cy="13" r="2" fill="#fff" stroke="#111"/><circle cx="13" cy="13" r="2" fill="#fff" stroke="#111"/></svg><svg style="left:236px;top:808px" width="16" height="16" viewBox="0 0 16 16"><circle cx="8" cy="4" r="2.5" fill="none" stroke="#999"/><circle cx="4" cy="12" r="2.5" fill="none" stroke="#999"/><circle cx="12" cy="12" r="2.5" fill="none" stroke="#999"/><path d="M8 6 V10 L4 10 M8 10 L12 10" stroke="#999"/></svg><svg style="left:258px;top:808px" width="16" height="16" viewBox="0 0 16 16"><circle cx="8" cy="8" r="6.5" fill="none" stroke="#111" stroke-dasharray="1.5 1"/><circle cx="8" cy="8" r="4" fill="#7a7010"/></svg><svg style="left:277px;top:815px" width="7" height="4" viewBox="0 0 7 4"><path d="M0 0 H7 L3.5 4 Z" fill="#1c2a40"/></svg><div class="a" style="left:290px;top:807px;width:1px;height:17px;background:#8d99ad;box-shadow:1px 0 0 #eef1f6"></div><svg style="left:297px;top:808px" width="16" height="16" viewBox="0 0 16 16"><path d="M4 2 H12 L15 8 L12 14 H4 L1 8 Z" fill="none" stroke="#1a2ad0" stroke-width="1.8"/></svg><svg style="left:319px;top:808px" width="16" height="16" viewBox="0 0 16 16"><path d="M4 2 H12 L15 8 L12 14 H4 L1 8 Z" fill="none" stroke="#e8e030" stroke-width="1.8"/><path d="M4 2 L1 8 L4 14" stroke="#1a2ad0" stroke-width="1.8" fill="none"/></svg><svg style="left:341px;top:808px" width="16" height="16" viewBox="0 0 16 16"><rect x="1.5" y="3.5" width="9" height="8" fill="none" stroke="#8a8a9a"/><path d="M5 1.5 H11 L13 4 L11 6.5 H5 L3 4 Z" fill="none" stroke="#1a3ab0" stroke-width="1.2"/><path d="M7 9.5 H13 L15 12 L13 14.5 H7 L5 12 Z" fill="none" stroke="#1a3ab0" stroke-width="1.2"/><path d="M4 6.5 H10 L12 9 L10 11.5 H4 L2 9 Z" fill="none" stroke="#6a7ab0" stroke-width="1"/></svg><svg style="left:363px;top:808px" width="16" height="16" viewBox="0 0 16 16"><path d="M1 1.5 L7 7.5 M7 1.5 L1 7.5 M9 1.5 L15 7.5 M15 1.5 L9 7.5 M1 8.5 L7 14.5 M7 8.5 L1 14.5 M9 8.5 L15 14.5 M15 8.5 L9 14.5" stroke="#1020a0" stroke-width="1.4" fill="none"/><path d="M4 4.5 L12 11.5 M12 4.5 L4 11.5" stroke="#111" stroke-width="1.6"/></svg><svg style="left:385px;top:808px" width="16" height="16" viewBox="0 0 16 16"><path d="M1 1.5 L7 7.5 M7 1.5 L1 7.5 M9 1.5 L15 7.5 M15 1.5 L9 7.5 M1 8.5 L7 14.5 M7 8.5 L1 14.5 M9 8.5 L15 14.5 M15 8.5 L9 14.5" stroke="#c03020" stroke-width="1.4" fill="none"/><path d="M4 4.5 L12 11.5 M12 4.5 L4 11.5" stroke="#111" stroke-width="1.6"/></svg><div class="a" style="left:405px;top:807px;width:1px;height:17px;background:#8d99ad;box-shadow:1px 0 0 #eef1f6"></div><svg style="left:412px;top:808px" width="16" height="16" viewBox="0 0 16 16"><path d="M4 12 L11 5" stroke="#111" stroke-width="1.5"/><circle cx="4" cy="12" r="3" fill="#a8c8e8" stroke="#111"/><circle cx="12" cy="4" r="3.2" fill="#ffee00" stroke="#111"/></svg><svg style="left:434px;top:808px" width="16" height="16" viewBox="0 0 16 16"><path d="M2 2 L5.5 6 M14 2 L10.5 6 M2 14 L5.5 10 M14 14 L10.5 10 M5.5 6 H10.5 L12.5 8 L10.5 10 H5.5 L3.5 8 Z" stroke="#1a2a90" stroke-width="1.4" fill="none"/><rect x="1" y="1" width="3" height="3" fill="#ffee00"/><rect x="12" y="1" width="3" height="3" fill="#ffee00"/><rect x="1" y="12" width="3" height="3" fill="#ffee00"/><rect x="12" y="12" width="3" height="3" fill="#ffee00"/></svg><svg style="left:456px;top:808px" width="16" height="16" viewBox="0 0 16 16"><path d="M6 1 H12 L14 4 L12 7 H6 L4 4 Z" fill="none" stroke="#d8d020" stroke-width="1.2"/><path d="M3 8 H9 L11 11.5 L9 15 H3 L1 11.5 Z" fill="none" stroke="#111" stroke-width="1.5"/></svg><svg style="left:478px;top:808px" width="16" height="16" viewBox="0 0 16 16"><path d="M6 1 H12 L14 4 L12 7 H6 L4 4 Z" fill="none" stroke="#999" stroke-width="1.2"/><path d="M3 8 H9 L11 11.5 L9 15 H3 L1 11.5 Z" fill="none" stroke="#999" stroke-width="1.2"/></svg><div class="a" style="left:500px;top:807px;width:1px;height:17px;background:#8d99ad;box-shadow:1px 0 0 #eef1f6"></div><svg style="left:507px;top:808px" width="16" height="16" viewBox="0 0 16 16"><rect x="1" y="1" width="14" height="14" fill="none" stroke="#1a2ab0" stroke-width="1.3"/><rect x="4" y="4" width="8" height="8" fill="none" stroke="#1a2ab0"/><path d="M1 1 L4 4 M15 1 L12 4 M1 15 L4 12 M15 15 L12 12" stroke="#1a2ab0"/></svg><svg style="left:529px;top:808px" width="16" height="16" viewBox="0 0 16 16"><path d="M8 1 L15 8 L8 15 L1 8 Z" fill="#ffee00" stroke="#111" stroke-width="1.2"/><path d="M1 8 H15 M8 1 V15" stroke="#111"/></svg><svg style="left:551px;top:808px" width="16" height="16" viewBox="0 0 16 16"><path d="M1 6 L5 3 L9 6 L13 3 M1 10 L5 7 L9 10 L13 7" stroke="#111" fill="none"/><path d="M1 4 L15 13 M1 13 L14 5" stroke="#e81010" stroke-width="2.2"/></svg><svg style="left:571px;top:815px" width="7" height="4" viewBox="0 0 7 4"><path d="M0 0 H7 L3.5 4 Z" fill="#1c2a40"/></svg><svg style="left:584px;top:808px" width="16" height="16" viewBox="0 0 16 16"><circle cx="4" cy="12" r="3" fill="#ffee00" stroke="#111"/><path d="M6 10 L9 7" stroke="#111"/><text x="7" y="8" font-family="Liberation Sans" font-weight="bold" font-size="8" fill="#111">Fe</text></svg><div class="a" style="left:605px;top:807px;width:1px;height:17px;background:#8d99ad;box-shadow:1px 0 0 #eef1f6"></div><svg style="left:611px;top:808px" width="16" height="16" viewBox="0 0 16 16"><rect x="0.5" y="0.5" width="15" height="15" fill="#fff" stroke="#1a2ab0"/><path d="M8 2 L11 5 H5 Z M8 14 L11 11 H5 Z M2 8 L5 5 V11 Z M14 8 L11 5 V11 Z" fill="#111"/><circle cx="8" cy="8" r="2.5" fill="#ffee00" stroke="#111"/></svg><svg style="left:631px;top:815px" width="7" height="4" viewBox="0 0 7 4"><path d="M0 0 H7 L3.5 4 Z" fill="#1c2a40"/></svg><div class="a" style="left:644px;top:807px;width:1px;height:17px;background:#8d99ad;box-shadow:1px 0 0 #eef1f6"></div><svg style="left:651px;top:808px" width="16" height="16" viewBox="0 0 16 16"><text x="0" y="14" font-family="Liberation Serif" font-style="italic" font-weight="bold" font-size="16" fill="#1a2ab0">M</text></svg><svg style="left:673px;top:808px" width="16" height="16" viewBox="0 0 16 16"><rect x="0.5" y="0.5" width="15" height="15" fill="#fff" stroke="#1a2a90"/><circle cx="7" cy="7" r="4" fill="#f0f0f0" stroke="#e02020"/><circle cx="9.5" cy="9.5" r="3.5" fill="#10a090"/></svg><div class="a" style="left:714px;top:804px;width:23px;height:22px;background:#fde7b2;border:1px solid #e4c27a"></div><svg style="left:719px;top:808px" width="16" height="16" viewBox="0 0 16 16"><path d="M2 1 L2 13 L5 10 L8 15 L10 14 L7 9 L11 9 Z" fill="#fff" stroke="#111"/></svg><svg style="left:739px;top:808px" width="16" height="16" viewBox="0 0 16 16"><path d="M8 0 L11 4 H5 Z M8 16 L11 12 H5 Z M0 8 L4 5 V11 Z M16 8 L12 5 V11 Z" fill="#111"/><path d="M8 4 V12 M4 8 H12" stroke="#111" stroke-width="2"/></svg><svg style="left:761px;top:808px" width="16" height="16" viewBox="0 0 16 16"><path d="M13 8 A5 5 0 1 1 9 3" stroke="#111" stroke-width="2.2" fill="none"/><path d="M8 0 L13 3 L8 6 Z" fill="#111"/></svg><svg style="left:783px;top:808px" width="16" height="16" viewBox="0 0 16 16"><path d="M8 0 L11 4 H5 Z M8 16 L11 12 H5 Z M0 8 L4 5 V11 Z M16 8 L12 5 V11 Z" fill="#111"/><path d="M8 3 V13 M3 8 H13" stroke="#111" stroke-width="2"/></svg><svg style="left:806px;top:808px" width="16" height="16" viewBox="0 0 16 16"><path d="M1 5 V1 H5 M11 1 H15 V5 M15 11 V15 H11 M5 15 H1 V11 M2 2 L5 5 M14 2 L11 5 M2 14 L5 11 M14 14 L11 11" stroke="#111" stroke-width="1.5" fill="none"/><circle cx="8" cy="8" r="3" fill="none" stroke="#111" stroke-width="1.5"/></svg><svg style="left:827px;top:808px" width="16" height="16" viewBox="0 0 16 16"><path d="M14 2 L2 8 L14 14 M9 5 Q7 8 9 11" stroke="#111" stroke-width="1.8" fill="none"/></svg><svg style="left:849px;top:808px" width="16" height="16" viewBox="0 0 16 16"><path d="M2 8 L8 2 L14 8 M4 14 L8 6 L12 14 M5 11 H11" stroke="#111" stroke-width="1.5" fill="none"/></svg><svg style="left:871px;top:808px" width="16" height="16" viewBox="0 0 16 16"><circle cx="8" cy="8" r="4" fill="none" stroke="#111" stroke-width="1.8"/><circle cx="8" cy="8" r="1.5" fill="#111"/><path d="M1 8 H3 M13 8 H15 M8 1 V3 M8 13 V15" stroke="#111" stroke-width="1.5"/></svg><svg style="left:893px;top:808px" width="16" height="16" viewBox="0 0 16 16"><rect x="1" y="2" width="8" height="6" fill="none" stroke="#888" stroke-width="1.3"/><rect x="6" y="7" width="3" height="8" fill="none" stroke="#888"/><rect x="11" y="7" width="3" height="8" fill="none" stroke="#888"/></svg><svg style="left:915px;top:808px" width="16" height="16" viewBox="0 0 16 16"><rect x="1" y="2" width="8" height="6" fill="none" stroke="#888" stroke-width="1.3"/><rect x="6" y="8" width="9" height="7" fill="#888"/></svg><svg style="left:961px;top:808px" width="16" height="16" viewBox="0 0 16 16"><path d="M2 2 V14 H15 M5 5 V14 M8 5 V14 M11 5 V14 M14 5 V14" stroke="#111" stroke-width="1.4" fill="none"/></svg><svg style="left:983px;top:808px" width="16" height="16" viewBox="0 0 16 16"><path d="M8 2 L14 14 H2 Z" fill="none" stroke="#111" stroke-width="1.3"/></svg><svg style="left:1005px;top:808px" width="16" height="16" viewBox="0 0 16 16"><circle cx="6" cy="11" r="4" fill="none" stroke="#111" stroke-width="1.5"/><path d="M8 8 L14 2" stroke="#111" stroke-width="2"/><path d="M4 2 L8 6" stroke="#111"/></svg><svg style="left:1027px;top:808px" width="16" height="16" viewBox="0 0 16 16"><path d="M1 10 L9 3 L15 6 L8 13 Z" fill="#fff" stroke="#111" stroke-width="1.3"/><path d="M1 10 L8 13 L8 15 L1 12 Z" fill="#888" stroke="#111"/></svg><div class="a" style="left:7px;top:828px;width:1665px;height:21px;background:#2a3752;border-top:1px solid #1e2940"></div><div class="t" style="left:11px;top:832px;font-size:11.5px;color:#f0f0f0;">Success. 74 atoms created.</div><div class="a" style="left:910px;top:830px;width:1px;height:17px;background:#8a96aa"></div><div class="a" style="left:1014px;top:830px;width:1px;height:17px;background:#8a96aa"></div><div class="a" style="left:1040px;top:830px;width:1px;height:17px;background:#8a96aa"></div><div class="a" style="left:1068px;top:830px;width:1px;height:17px;background:#8a96aa"></div><div class="a" style="left:1096px;top:830px;width:1px;height:17px;background:#8a96aa"></div><div class="a" style="left:1269px;top:830px;width:1px;height:17px;background:#8a96aa"></div><div class="a" style="left:1312px;top:830px;width:1px;height:17px;background:#8a96aa"></div><div class="a" style="left:1384px;top:830px;width:1px;height:17px;background:#8a96aa"></div><div class="a" style="left:1455px;top:830px;width:1px;height:17px;background:#8a96aa"></div><div class="a" style="left:1525px;top:830px;width:1px;height:17px;background:#8a96aa"></div><div class="a" style="left:1589px;top:830px;width:1px;height:17px;background:#8a96aa"></div><div class="a" style="left:1072px;top:828px;width:22px;height:21px;overflow:hidden"><div class="t" style="left:2px;top:4px;font-size:12px;color:#f0f0f0">APC</div></div><div class="a" style="left:1099px;top:831px;width:101px;height:16px;background:#fdcf98"></div><div class="t" style="left:1102px;top:832px;font-size:12px;color:#111;">Auto Picture</div><div class="t" style="left:1206px;top:832px;font-size:12px;color:#f0f0f0;letter-spacing:-0.2px">Y. 0.607016</div><div class="t" style="left:1317px;top:832px;font-size:12px;color:#f0f0f0;">6 parms</div><div class="t" style="left:1388px;top:832px;font-size:12px;color:#f0f040;">1/64 at.</div><div class="t" style="left:1459px;top:832px;font-size:12px;color:#f0f0f0;">62 bonds</div><div class="t" style="left:1531px;top:832px;font-size:12px;color:#f0f0f0;">polymeric</div><div class="t" style="left:1594px;top:832px;font-size:12px;color:#f0f0f0;">0 polyh.</div><div class="a" style="left:1668px;top:835px;width:2px;height:2px;background:#e8ecf2"></div><div class="a" style="left:1665px;top:838px;width:2px;height:2px;background:#e8ecf2"></div><div class="a" style="left:1668px;top:838px;width:2px;height:2px;background:#e8ecf2"></div><div class="a" style="left:1662px;top:841px;width:2px;height:2px;background:#e8ecf2"></div><div class="a" style="left:1665px;top:841px;width:2px;height:2px;background:#e8ecf2"></div><div class="a" style="left:1668px;top:841px;width:2px;height:2px;background:#e8ecf2"></div><div class="a" style="left:1659px;top:844px;width:2px;height:2px;background:#e8ecf2"></div><div class="a" style="left:1662px;top:844px;width:2px;height:2px;background:#e8ecf2"></div><div class="a" style="left:1665px;top:844px;width:2px;height:2px;background:#e8ecf2"></div><div class="a" style="left:1668px;top:844px;width:2px;height:2px;background:#e8ecf2"></div>
</body></html>
